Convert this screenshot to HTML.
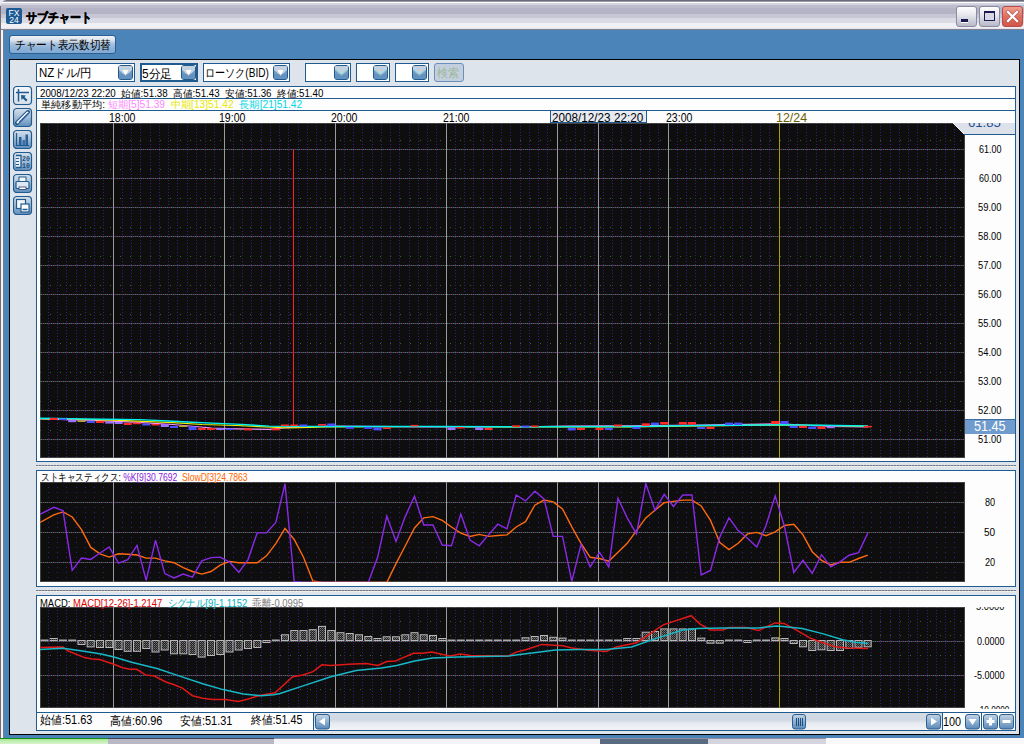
<!DOCTYPE html><html lang="ja"><head><meta charset="utf-8"><style>
*{margin:0;padding:0;box-sizing:border-box}
html,body{width:1024px;height:744px;overflow:hidden;background:#4a84b8;font-family:"Liberation Sans", sans-serif;}
.a{position:absolute}
.t{position:absolute;white-space:nowrap;line-height:1;color:#000}
.dd{position:absolute;background:#fff;border:1px solid #1f5b8e}
.arr{position:absolute;border:1px solid #2a5f92;border-radius:2px;background:linear-gradient(#a9c3dc,#6f99c2 55%,#5584b4)}
.arr:after{content:"";position:absolute;left:4px;top:5px;border-left:3px solid transparent;border-right:3px solid transparent;border-top:5px solid #fff}
.arrd{position:absolute;border:1px solid #2a5f92;border-radius:2px;background:linear-gradient(#c9d3de,#b6c5d4 40%,#6f99c2 60%,#5584b4)}
.panel{position:absolute;background:#fdfdfd;border:1px solid #1f5b8e}
.blk{position:absolute;background:#0e0e0e}
.ic{position:absolute;width:19px;height:19px;border:1px solid #1f5b8e;border-radius:4px;overflow:hidden}
</style></head><body>
<div class="a" style="left:0;top:0;width:1024px;height:744px;background:#4a84b8"></div>
<div class="a" style="left:0;top:6px;width:1px;height:732px;background:#6d6d7a"></div>
<div class="a" style="left:1px;top:6px;width:2px;height:732px;background:#f4f4f8"></div>
<div class="a" style="left:3px;top:6px;width:1px;height:732px;background:#7d7d8a"></div>
<div class="a" style="left:0;top:0;width:1024px;height:8px;background:#e8e8ee"></div>
<div class="a" style="left:0;top:0;width:1024px;height:30px;border-radius:7px 0 0 0;overflow:hidden;background:linear-gradient(#6a6a78 0 1px,#9898a8 1px 2px,#ffffff 2px 3px,#d4d4e0 3px 5px,#bcbccc 5px 8px,#b4b4c6 8px 14px,#c6c6d4 14px 18px,#dadae4 18px 23px,#f0f0f4 23px 28px,#e4e4ec 28px 29px,#80808e 29px 30px)"></div>
<div class="a" style="left:0;top:6px;width:1px;height:24px;background:#6d6d7a"></div>
<div class="a" style="left:6px;top:8px;width:16px;height:16px;background:#1d5a93;border-radius:2px"></div>
<svg class="a" style="left:6px;top:8px" width="16" height="16"><text x="8" y="7.5" font-family="Liberation Sans" font-size="8.5" fill="#fff" text-anchor="middle">FX</text><text x="8" y="15" font-family="Liberation Sans" font-size="8.5" fill="#fff" text-anchor="middle">24</text></svg>
<div class="t" id="tx1" style="left:26.40px;top:11px;font-size:13px;transform:scaleX(0.8395);transform-origin:0 0;font-weight:bold;-webkit-text-stroke:0.5px #000">サブチャート</div>
<div class="a" style="left:956px;top:6px;width:21px;height:21px;border:1px solid #8a8aa0;border-radius:3px;background:linear-gradient(#ffffff,#e8e8ef 40%,#c8c8d6 80%,#b8b8c8)"></div>
<div class="a" style="left:979px;top:6px;width:21px;height:21px;border:1px solid #8a8aa0;border-radius:3px;background:linear-gradient(#ffffff,#e8e8ef 40%,#c8c8d6 80%,#b8b8c8)"></div>
<div class="a" style="left:1002px;top:6px;width:21px;height:21px;border:1px solid #b84a4a;border-radius:3px;background:linear-gradient(#f0a090,#e07060 50%,#d05848)"></div>
<div class="a" style="left:961px;top:19px;width:7px;height:3px;background:#1a1a50;box-shadow:0 1px 0 #fff"></div>
<div class="a" style="left:984px;top:11px;width:11px;height:10px;border:1px solid #1a1a50;border-top-width:2px;background:#d8d8e4"></div>
<svg class="a" style="left:1002px;top:6px" width="21" height="21"><path d="M6 6 L15 15 M15 6 L6 15" stroke="#9a3838" stroke-width="3.6" stroke-linecap="square" opacity="0.7"/><path d="M6 6 L15 15 M15 6 L6 15" stroke="#fff" stroke-width="2.4" stroke-linecap="square"/></svg>
<div class="a" style="left:9px;top:59px;width:1011px;height:676px;border:1px solid #000;background:#dee4ec"></div>
<div class="a" style="left:9px;top:35px;width:107px;height:19px;border:1px solid #2a5f92;border-radius:3px;background:linear-gradient(#eef1f6 0%,#dce3ec 25%,#a9c3df 45%,#8fb3d8 70%,#82aad4 100%)"></div>
<div class="t" id="tx2" style="left:14.81px;top:39px;font-size:12px;transform:scaleX(0.8896);transform-origin:0 0;">チャート表示数切替</div>
<div class="dd" style="left:36px;top:63px;width:99px;height:19px;"></div>
<svg class="a" style="left:118px;top:65px" width="15" height="15"><rect x="0.5" y="0.5" width="14" height="14" rx="2.5" fill="#6f9ac4" stroke="#1f5b8e" stroke-width="1"/><path d="M1 1.5 Q1 1 2 1 L13 1 Q14 1 14 2 L14 5 L7.5 11 L1 5 Z" fill="#c4d1df"/><rect x="1" y="9" width="13" height="5" fill="#5f8cbc" opacity="0.6"/><path d="M4.5 5 L10.5 5 L7.5 10.5 Z" fill="#fff"/></svg>
<div class="dd" style="left:140px;top:63px;width:58px;height:19px;border:2px solid #1f5b8e;"></div>
<svg class="a" style="left:181px;top:65px" width="15" height="15"><rect x="0.5" y="0.5" width="14" height="14" rx="2.5" fill="#6f9ac4" stroke="#1f5b8e" stroke-width="1"/><path d="M1 1.5 Q1 1 2 1 L13 1 Q14 1 14 2 L14 5 L7.5 11 L1 5 Z" fill="#c4d1df"/><rect x="1" y="9" width="13" height="5" fill="#5f8cbc" opacity="0.6"/><path d="M4.5 5 L10.5 5 L7.5 10.5 Z" fill="#fff"/></svg>
<div class="dd" style="left:203px;top:63px;width:87px;height:19px;"></div>
<svg class="a" style="left:273px;top:65px" width="15" height="15"><rect x="0.5" y="0.5" width="14" height="14" rx="2.5" fill="#6f9ac4" stroke="#1f5b8e" stroke-width="1"/><path d="M1 1.5 Q1 1 2 1 L13 1 Q14 1 14 2 L14 5 L7.5 11 L1 5 Z" fill="#c4d1df"/><rect x="1" y="9" width="13" height="5" fill="#5f8cbc" opacity="0.6"/><path d="M4.5 5 L10.5 5 L7.5 10.5 Z" fill="#fff"/></svg>
<div class="dd" style="left:305px;top:63px;width:46px;height:19px;"></div>
<svg class="a" style="left:334px;top:65px" width="15" height="15"><rect x="0.5" y="0.5" width="14" height="14" rx="2.5" fill="#6f9ac4" stroke="#1f5b8e" stroke-width="1"/><path d="M1 1.5 Q1 1 2 1 L13 1 Q14 1 14 2 L14 5 L7.5 11 L1 5 Z" fill="#c4d1df"/><rect x="1" y="9" width="13" height="5" fill="#5f8cbc" opacity="0.6"/><path d="M2 5 L7.5 10 L13 5" fill="none" stroke="#6fd0d8" stroke-width="1"/></svg>
<div class="dd" style="left:356px;top:63px;width:34px;height:19px;"></div>
<svg class="a" style="left:373px;top:65px" width="15" height="15"><rect x="0.5" y="0.5" width="14" height="14" rx="2.5" fill="#6f9ac4" stroke="#1f5b8e" stroke-width="1"/><path d="M1 1.5 Q1 1 2 1 L13 1 Q14 1 14 2 L14 5 L7.5 11 L1 5 Z" fill="#c4d1df"/><rect x="1" y="9" width="13" height="5" fill="#5f8cbc" opacity="0.6"/><path d="M2 5 L7.5 10 L13 5" fill="none" stroke="#6fd0d8" stroke-width="1"/></svg>
<div class="dd" style="left:395px;top:63px;width:34px;height:19px;"></div>
<svg class="a" style="left:412px;top:65px" width="15" height="15"><rect x="0.5" y="0.5" width="14" height="14" rx="2.5" fill="#6f9ac4" stroke="#1f5b8e" stroke-width="1"/><path d="M1 1.5 Q1 1 2 1 L13 1 Q14 1 14 2 L14 5 L7.5 11 L1 5 Z" fill="#c4d1df"/><rect x="1" y="9" width="13" height="5" fill="#5f8cbc" opacity="0.6"/><path d="M2 5 L7.5 10 L13 5" fill="none" stroke="#6fd0d8" stroke-width="1"/></svg>
<div class="t" id="tx3" style="left:38.80px;top:67px;font-size:12px;transform:scaleX(0.9528);transform-origin:0 0;">NZドル/円</div>
<div class="t" id="tx4" style="left:141.51px;top:68px;font-size:12px;transform:scaleX(0.9897);transform-origin:0 0;">5分足</div>
<div class="t" id="tx5" style="left:204.72px;top:67px;font-size:12px;transform:scaleX(0.8411);transform-origin:0 0;">ローソク(BID)</div>
<div class="a" style="left:434px;top:63px;width:30px;height:19px;border:1px solid #6a8fb8;border-radius:3px;background:#c3cfdc"></div>
<div class="t" id="tx6" style="left:437.40px;top:67px;font-size:12px;transform:scaleX(0.9167);transform-origin:0 0;color:#9fb89f">検索</div>
<svg class="a" style="left:13px;top:86px" width="20" height="20"><defs><linearGradient id="g86" x1="0" y1="0" x2="0" y2="1"><stop offset="0" stop-color="#f6f8fb"/><stop offset="1" stop-color="#d4dde8"/></linearGradient></defs><rect x="0.5" y="0.5" width="18" height="18" rx="3.5" fill="url(#g86)" stroke="#1f5b8e" stroke-width="1.2"/><path d="M5.5 3 V15.5 M3 6.5 H16" stroke="#1f5b8e" stroke-width="1.5"/><path d="M8 9 L13 9.5 L11.5 11 L14.5 14 L13 15.5 L10 12.5 L8.5 14 Z" fill="#1f5b8e"/></svg>
<svg class="a" style="left:13px;top:108px" width="20" height="20"><defs><linearGradient id="g108" x1="0" y1="0" x2="0" y2="1"><stop offset="0" stop-color="#d6e0ea"/><stop offset="0.45" stop-color="#a8c0d8"/><stop offset="1" stop-color="#5f8dbd"/></linearGradient></defs><rect x="0.5" y="0.5" width="18" height="18" rx="3.5" fill="url(#g108)" stroke="#1f5b8e" stroke-width="1.2"/><path d="M4 15 L15 4" stroke="#1f4f80" stroke-width="4" stroke-linecap="round"/><path d="M4.5 14.5 L14.5 4.5" stroke="#f4f8ff" stroke-width="2" stroke-linecap="round"/><path d="M6 14 L15 5" stroke="#3a6fd8" stroke-width="1"/></svg>
<svg class="a" style="left:13px;top:130px" width="20" height="20"><defs><linearGradient id="g130" x1="0" y1="0" x2="0" y2="1"><stop offset="0" stop-color="#d6e0ea"/><stop offset="0.45" stop-color="#a8c0d8"/><stop offset="1" stop-color="#5f8dbd"/></linearGradient></defs><rect x="0.5" y="0.5" width="18" height="18" rx="3.5" fill="url(#g130)" stroke="#1f5b8e" stroke-width="1.2"/><path d="M3.5 3 V15.5 H16" stroke="#1f5b8e" stroke-width="1.2" fill="none"/><rect x="6" y="7" width="2.5" height="8" fill="#2a5f98"/><rect x="9.5" y="10" width="2.5" height="5" fill="#3a70a8"/><rect x="12.5" y="4.5" width="2.5" height="10.5" fill="#2a5f98"/></svg>
<svg class="a" style="left:13px;top:152px" width="20" height="20"><defs><linearGradient id="g152" x1="0" y1="0" x2="0" y2="1"><stop offset="0" stop-color="#d6e0ea"/><stop offset="0.45" stop-color="#a8c0d8"/><stop offset="1" stop-color="#5f8dbd"/></linearGradient></defs><rect x="0.5" y="0.5" width="18" height="18" rx="3.5" fill="url(#g152)" stroke="#1f5b8e" stroke-width="1.2"/><path d="M3 3.5 H8 V15.5 H3" stroke="#1f5b8e" stroke-width="1.3" fill="#e8eef6"/><path d="M3 6.5 H6 M3 9.5 H6 M3 12.5 H6" stroke="#1f5b8e" stroke-width="1"/><text x="9" y="9" font-family="Liberation Mono" font-size="6.5" font-weight="bold" fill="#1f4f80">20</text><text x="9" y="15.5" font-family="Liberation Mono" font-size="6.5" font-weight="bold" fill="#1f4f80">10</text></svg>
<svg class="a" style="left:13px;top:174px" width="20" height="20"><defs><linearGradient id="g174" x1="0" y1="0" x2="0" y2="1"><stop offset="0" stop-color="#d6e0ea"/><stop offset="0.45" stop-color="#a8c0d8"/><stop offset="1" stop-color="#5f8dbd"/></linearGradient></defs><rect x="0.5" y="0.5" width="18" height="18" rx="3.5" fill="url(#g174)" stroke="#1f5b8e" stroke-width="1.2"/><rect x="6" y="3" width="7" height="5" fill="#f4f6fa" stroke="#1f5b8e" stroke-width="1"/><rect x="3" y="7.5" width="13" height="7" rx="1" fill="#dfe8f2" stroke="#1f5b8e" stroke-width="1.2"/><rect x="6" y="13" width="7" height="2.5" fill="#fff" stroke="#1f3f70" stroke-width="0.8"/></svg>
<svg class="a" style="left:13px;top:196px" width="20" height="20"><defs><linearGradient id="g196" x1="0" y1="0" x2="0" y2="1"><stop offset="0" stop-color="#d6e0ea"/><stop offset="0.45" stop-color="#a8c0d8"/><stop offset="1" stop-color="#5f8dbd"/></linearGradient></defs><rect x="0.5" y="0.5" width="18" height="18" rx="3.5" fill="url(#g196)" stroke="#1f5b8e" stroke-width="1.2"/><rect x="3.5" y="3.5" width="9" height="9" fill="#f4f6fa" stroke="#1f5b8e" stroke-width="1.2"/><rect x="8" y="8" width="8" height="8" fill="#ffffff" stroke="#1f5b8e" stroke-width="1.2"/><path d="M9.5 13.5 H14.5" stroke="#1f5b8e" stroke-width="1.5"/></svg>
<div class="panel" style="left:36px;top:86px;width:980px;height:376px"></div>
<div class="panel" style="left:36px;top:470px;width:980px;height:117px"></div>
<div class="panel" style="left:36px;top:595px;width:980px;height:136px"></div>
<div class="a" style="left:36px;top:465px;width:980px;height:1px;background:repeating-linear-gradient(90deg,#707888 0 2px,#a0a8b8 2px 3px)"></div><div class="a" style="left:36px;top:466px;width:980px;height:1px;background:#eef0e8"></div>
<div class="a" style="left:36px;top:590px;width:980px;height:1px;background:repeating-linear-gradient(90deg,#707888 0 2px,#a0a8b8 2px 3px)"></div><div class="a" style="left:36px;top:591px;width:980px;height:1px;background:#eef0e8"></div>
<div class="a" style="left:37px;top:98px;width:978px;height:1px;background:#1f5b8e"></div>
<div class="a" style="left:37px;top:110px;width:978px;height:1px;background:#1f5b8e"></div>
<div class="t" id="tx7" style="left:40.00px;top:89px;font-size:10px;transform:scaleX(0.9729);transform-origin:0 0;">2008/12/23 22:20&nbsp; 始値:51.38&nbsp; 高値:51.43&nbsp; 安値:51.36&nbsp; 終値:51.40</div>
<div class="t" id="tx8" style="left:41.28px;top:100px;font-size:10px;transform:scaleX(1.0192);transform-origin:0 0;">単純移動平均: <span style="color:#ff88ff">短期[5]51.39</span>&nbsp; <span style="color:#e8e800">中期[13]51.42</span>&nbsp; <span style="color:#00d8e8">長期[21]51.42</span></div>
<div class="blk" style="left:40px;top:123px;width:925px;height:335px"></div>
<div class="blk" style="left:40px;top:482px;width:925px;height:100px"></div>
<div class="blk" style="left:40px;top:607px;width:925px;height:101px"></div>
<svg class="a" style="left:0;top:0" width="1024" height="744"><defs><clipPath id="cm"><rect x="40" y="123" width="925" height="335"/></clipPath><clipPath id="cs"><rect x="40" y="482" width="925" height="100"/></clipPath><clipPath id="cd"><rect x="40" y="607" width="925" height="101"/></clipPath><pattern id="hp" width="2" height="2" patternUnits="userSpaceOnUse"><rect width="2" height="2" fill="#222"/><rect width="1" height="1" fill="#777"/><rect x="1" y="1" width="1" height="1" fill="#555"/></pattern></defs><g clip-path="url(#cm)"><line x1="48.5" y1="123" x2="48.5" y2="458" stroke="#3c1c80" stroke-width="1" stroke-dasharray="1 2"/><line x1="57.5" y1="123" x2="57.5" y2="458" stroke="#3c1c80" stroke-width="1" stroke-dasharray="1 2"/><line x1="66.5" y1="123" x2="66.5" y2="458" stroke="#3c1c80" stroke-width="1" stroke-dasharray="1 2"/><line x1="76.5" y1="123" x2="76.5" y2="458" stroke="#3c1c80" stroke-width="1" stroke-dasharray="1 2"/><line x1="85.5" y1="123" x2="85.5" y2="458" stroke="#3c1c80" stroke-width="1" stroke-dasharray="1 2"/><line x1="94.5" y1="123" x2="94.5" y2="458" stroke="#3c1c80" stroke-width="1" stroke-dasharray="1 2"/><line x1="103.5" y1="123" x2="103.5" y2="458" stroke="#3c1c80" stroke-width="1" stroke-dasharray="1 2"/><line x1="113.5" y1="123" x2="113.5" y2="458" stroke="#3c1c80" stroke-width="1" stroke-dasharray="1 2"/><line x1="122.5" y1="123" x2="122.5" y2="458" stroke="#3c1c80" stroke-width="1" stroke-dasharray="1 2"/><line x1="131.5" y1="123" x2="131.5" y2="458" stroke="#3c1c80" stroke-width="1" stroke-dasharray="1 2"/><line x1="140.5" y1="123" x2="140.5" y2="458" stroke="#3c1c80" stroke-width="1" stroke-dasharray="1 2"/><line x1="150.5" y1="123" x2="150.5" y2="458" stroke="#3c1c80" stroke-width="1" stroke-dasharray="1 2"/><line x1="159.5" y1="123" x2="159.5" y2="458" stroke="#3c1c80" stroke-width="1" stroke-dasharray="1 2"/><line x1="168.5" y1="123" x2="168.5" y2="458" stroke="#3c1c80" stroke-width="1" stroke-dasharray="1 2"/><line x1="177.5" y1="123" x2="177.5" y2="458" stroke="#3c1c80" stroke-width="1" stroke-dasharray="1 2"/><line x1="187.5" y1="123" x2="187.5" y2="458" stroke="#3c1c80" stroke-width="1" stroke-dasharray="1 2"/><line x1="196.5" y1="123" x2="196.5" y2="458" stroke="#3c1c80" stroke-width="1" stroke-dasharray="1 2"/><line x1="205.5" y1="123" x2="205.5" y2="458" stroke="#3c1c80" stroke-width="1" stroke-dasharray="1 2"/><line x1="214.5" y1="123" x2="214.5" y2="458" stroke="#3c1c80" stroke-width="1" stroke-dasharray="1 2"/><line x1="224.5" y1="123" x2="224.5" y2="458" stroke="#3c1c80" stroke-width="1" stroke-dasharray="1 2"/><line x1="233.5" y1="123" x2="233.5" y2="458" stroke="#3c1c80" stroke-width="1" stroke-dasharray="1 2"/><line x1="242.5" y1="123" x2="242.5" y2="458" stroke="#3c1c80" stroke-width="1" stroke-dasharray="1 2"/><line x1="251.5" y1="123" x2="251.5" y2="458" stroke="#3c1c80" stroke-width="1" stroke-dasharray="1 2"/><line x1="261.5" y1="123" x2="261.5" y2="458" stroke="#3c1c80" stroke-width="1" stroke-dasharray="1 2"/><line x1="270.5" y1="123" x2="270.5" y2="458" stroke="#3c1c80" stroke-width="1" stroke-dasharray="1 2"/><line x1="279.5" y1="123" x2="279.5" y2="458" stroke="#3c1c80" stroke-width="1" stroke-dasharray="1 2"/><line x1="288.5" y1="123" x2="288.5" y2="458" stroke="#3c1c80" stroke-width="1" stroke-dasharray="1 2"/><line x1="298.5" y1="123" x2="298.5" y2="458" stroke="#3c1c80" stroke-width="1" stroke-dasharray="1 2"/><line x1="307.5" y1="123" x2="307.5" y2="458" stroke="#3c1c80" stroke-width="1" stroke-dasharray="1 2"/><line x1="316.5" y1="123" x2="316.5" y2="458" stroke="#3c1c80" stroke-width="1" stroke-dasharray="1 2"/><line x1="325.5" y1="123" x2="325.5" y2="458" stroke="#3c1c80" stroke-width="1" stroke-dasharray="1 2"/><line x1="335.5" y1="123" x2="335.5" y2="458" stroke="#3c1c80" stroke-width="1" stroke-dasharray="1 2"/><line x1="344.5" y1="123" x2="344.5" y2="458" stroke="#3c1c80" stroke-width="1" stroke-dasharray="1 2"/><line x1="353.5" y1="123" x2="353.5" y2="458" stroke="#3c1c80" stroke-width="1" stroke-dasharray="1 2"/><line x1="362.5" y1="123" x2="362.5" y2="458" stroke="#3c1c80" stroke-width="1" stroke-dasharray="1 2"/><line x1="372.5" y1="123" x2="372.5" y2="458" stroke="#3c1c80" stroke-width="1" stroke-dasharray="1 2"/><line x1="381.5" y1="123" x2="381.5" y2="458" stroke="#3c1c80" stroke-width="1" stroke-dasharray="1 2"/><line x1="390.5" y1="123" x2="390.5" y2="458" stroke="#3c1c80" stroke-width="1" stroke-dasharray="1 2"/><line x1="399.5" y1="123" x2="399.5" y2="458" stroke="#3c1c80" stroke-width="1" stroke-dasharray="1 2"/><line x1="409.5" y1="123" x2="409.5" y2="458" stroke="#3c1c80" stroke-width="1" stroke-dasharray="1 2"/><line x1="418.5" y1="123" x2="418.5" y2="458" stroke="#3c1c80" stroke-width="1" stroke-dasharray="1 2"/><line x1="427.5" y1="123" x2="427.5" y2="458" stroke="#3c1c80" stroke-width="1" stroke-dasharray="1 2"/><line x1="436.5" y1="123" x2="436.5" y2="458" stroke="#3c1c80" stroke-width="1" stroke-dasharray="1 2"/><line x1="446.5" y1="123" x2="446.5" y2="458" stroke="#3c1c80" stroke-width="1" stroke-dasharray="1 2"/><line x1="455.5" y1="123" x2="455.5" y2="458" stroke="#3c1c80" stroke-width="1" stroke-dasharray="1 2"/><line x1="464.5" y1="123" x2="464.5" y2="458" stroke="#3c1c80" stroke-width="1" stroke-dasharray="1 2"/><line x1="473.5" y1="123" x2="473.5" y2="458" stroke="#3c1c80" stroke-width="1" stroke-dasharray="1 2"/><line x1="483.5" y1="123" x2="483.5" y2="458" stroke="#3c1c80" stroke-width="1" stroke-dasharray="1 2"/><line x1="492.5" y1="123" x2="492.5" y2="458" stroke="#3c1c80" stroke-width="1" stroke-dasharray="1 2"/><line x1="501.5" y1="123" x2="501.5" y2="458" stroke="#3c1c80" stroke-width="1" stroke-dasharray="1 2"/><line x1="510.5" y1="123" x2="510.5" y2="458" stroke="#3c1c80" stroke-width="1" stroke-dasharray="1 2"/><line x1="520.5" y1="123" x2="520.5" y2="458" stroke="#3c1c80" stroke-width="1" stroke-dasharray="1 2"/><line x1="529.5" y1="123" x2="529.5" y2="458" stroke="#3c1c80" stroke-width="1" stroke-dasharray="1 2"/><line x1="538.5" y1="123" x2="538.5" y2="458" stroke="#3c1c80" stroke-width="1" stroke-dasharray="1 2"/><line x1="547.5" y1="123" x2="547.5" y2="458" stroke="#3c1c80" stroke-width="1" stroke-dasharray="1 2"/><line x1="557.5" y1="123" x2="557.5" y2="458" stroke="#3c1c80" stroke-width="1" stroke-dasharray="1 2"/><line x1="566.5" y1="123" x2="566.5" y2="458" stroke="#3c1c80" stroke-width="1" stroke-dasharray="1 2"/><line x1="575.5" y1="123" x2="575.5" y2="458" stroke="#3c1c80" stroke-width="1" stroke-dasharray="1 2"/><line x1="584.5" y1="123" x2="584.5" y2="458" stroke="#3c1c80" stroke-width="1" stroke-dasharray="1 2"/><line x1="594.5" y1="123" x2="594.5" y2="458" stroke="#3c1c80" stroke-width="1" stroke-dasharray="1 2"/><line x1="603.5" y1="123" x2="603.5" y2="458" stroke="#3c1c80" stroke-width="1" stroke-dasharray="1 2"/><line x1="612.5" y1="123" x2="612.5" y2="458" stroke="#3c1c80" stroke-width="1" stroke-dasharray="1 2"/><line x1="621.5" y1="123" x2="621.5" y2="458" stroke="#3c1c80" stroke-width="1" stroke-dasharray="1 2"/><line x1="631.5" y1="123" x2="631.5" y2="458" stroke="#3c1c80" stroke-width="1" stroke-dasharray="1 2"/><line x1="640.5" y1="123" x2="640.5" y2="458" stroke="#3c1c80" stroke-width="1" stroke-dasharray="1 2"/><line x1="649.5" y1="123" x2="649.5" y2="458" stroke="#3c1c80" stroke-width="1" stroke-dasharray="1 2"/><line x1="658.5" y1="123" x2="658.5" y2="458" stroke="#3c1c80" stroke-width="1" stroke-dasharray="1 2"/><line x1="668.5" y1="123" x2="668.5" y2="458" stroke="#3c1c80" stroke-width="1" stroke-dasharray="1 2"/><line x1="677.5" y1="123" x2="677.5" y2="458" stroke="#3c1c80" stroke-width="1" stroke-dasharray="1 2"/><line x1="686.5" y1="123" x2="686.5" y2="458" stroke="#3c1c80" stroke-width="1" stroke-dasharray="1 2"/><line x1="695.5" y1="123" x2="695.5" y2="458" stroke="#3c1c80" stroke-width="1" stroke-dasharray="1 2"/><line x1="705.5" y1="123" x2="705.5" y2="458" stroke="#3c1c80" stroke-width="1" stroke-dasharray="1 2"/><line x1="714.5" y1="123" x2="714.5" y2="458" stroke="#3c1c80" stroke-width="1" stroke-dasharray="1 2"/><line x1="723.5" y1="123" x2="723.5" y2="458" stroke="#3c1c80" stroke-width="1" stroke-dasharray="1 2"/><line x1="732.5" y1="123" x2="732.5" y2="458" stroke="#3c1c80" stroke-width="1" stroke-dasharray="1 2"/><line x1="742.5" y1="123" x2="742.5" y2="458" stroke="#3c1c80" stroke-width="1" stroke-dasharray="1 2"/><line x1="751.5" y1="123" x2="751.5" y2="458" stroke="#3c1c80" stroke-width="1" stroke-dasharray="1 2"/><line x1="760.5" y1="123" x2="760.5" y2="458" stroke="#3c1c80" stroke-width="1" stroke-dasharray="1 2"/><line x1="769.5" y1="123" x2="769.5" y2="458" stroke="#3c1c80" stroke-width="1" stroke-dasharray="1 2"/><line x1="779.5" y1="123" x2="779.5" y2="458" stroke="#3c1c80" stroke-width="1" stroke-dasharray="1 2"/><line x1="788.5" y1="123" x2="788.5" y2="458" stroke="#3c1c80" stroke-width="1" stroke-dasharray="1 2"/><line x1="797.5" y1="123" x2="797.5" y2="458" stroke="#3c1c80" stroke-width="1" stroke-dasharray="1 2"/><line x1="806.5" y1="123" x2="806.5" y2="458" stroke="#3c1c80" stroke-width="1" stroke-dasharray="1 2"/><line x1="816.5" y1="123" x2="816.5" y2="458" stroke="#3c1c80" stroke-width="1" stroke-dasharray="1 2"/><line x1="825.5" y1="123" x2="825.5" y2="458" stroke="#3c1c80" stroke-width="1" stroke-dasharray="1 2"/><line x1="834.5" y1="123" x2="834.5" y2="458" stroke="#3c1c80" stroke-width="1" stroke-dasharray="1 2"/><line x1="843.5" y1="123" x2="843.5" y2="458" stroke="#3c1c80" stroke-width="1" stroke-dasharray="1 2"/><line x1="853.5" y1="123" x2="853.5" y2="458" stroke="#3c1c80" stroke-width="1" stroke-dasharray="1 2"/><line x1="862.5" y1="123" x2="862.5" y2="458" stroke="#3c1c80" stroke-width="1" stroke-dasharray="1 2"/><line x1="871.5" y1="123" x2="871.5" y2="458" stroke="#3c1c80" stroke-width="1" stroke-dasharray="1 2"/><line x1="880.5" y1="123" x2="880.5" y2="458" stroke="#3c1c80" stroke-width="1" stroke-dasharray="1 2"/><line x1="890.5" y1="123" x2="890.5" y2="458" stroke="#3c1c80" stroke-width="1" stroke-dasharray="1 2"/><line x1="899.5" y1="123" x2="899.5" y2="458" stroke="#3c1c80" stroke-width="1" stroke-dasharray="1 2"/><line x1="908.5" y1="123" x2="908.5" y2="458" stroke="#3c1c80" stroke-width="1" stroke-dasharray="1 2"/><line x1="917.5" y1="123" x2="917.5" y2="458" stroke="#3c1c80" stroke-width="1" stroke-dasharray="1 2"/><line x1="927.5" y1="123" x2="927.5" y2="458" stroke="#3c1c80" stroke-width="1" stroke-dasharray="1 2"/><line x1="936.5" y1="123" x2="936.5" y2="458" stroke="#3c1c80" stroke-width="1" stroke-dasharray="1 2"/><line x1="945.5" y1="123" x2="945.5" y2="458" stroke="#3c1c80" stroke-width="1" stroke-dasharray="1 2"/><line x1="954.5" y1="123" x2="954.5" y2="458" stroke="#3c1c80" stroke-width="1" stroke-dasharray="1 2"/><line x1="40" y1="140.5" x2="964" y2="140.5" stroke="#2a6a2a" stroke-width="1" stroke-dasharray="1 9"/><line x1="40" y1="169.5" x2="964" y2="169.5" stroke="#2a6a2a" stroke-width="1" stroke-dasharray="1 9"/><line x1="40" y1="198.5" x2="964" y2="198.5" stroke="#2a6a2a" stroke-width="1" stroke-dasharray="1 9"/><line x1="40" y1="227.5" x2="964" y2="227.5" stroke="#2a6a2a" stroke-width="1" stroke-dasharray="1 9"/><line x1="40" y1="256.5" x2="964" y2="256.5" stroke="#2a6a2a" stroke-width="1" stroke-dasharray="1 9"/><line x1="40" y1="285.5" x2="964" y2="285.5" stroke="#2a6a2a" stroke-width="1" stroke-dasharray="1 9"/><line x1="40" y1="314.5" x2="964" y2="314.5" stroke="#2a6a2a" stroke-width="1" stroke-dasharray="1 9"/><line x1="40" y1="343.5" x2="964" y2="343.5" stroke="#2a6a2a" stroke-width="1" stroke-dasharray="1 9"/><line x1="40" y1="372.5" x2="964" y2="372.5" stroke="#2a6a2a" stroke-width="1" stroke-dasharray="1 9"/><line x1="40" y1="401.5" x2="964" y2="401.5" stroke="#2a6a2a" stroke-width="1" stroke-dasharray="1 9"/><line x1="40" y1="430.5" x2="964" y2="430.5" stroke="#2a6a2a" stroke-width="1" stroke-dasharray="1 9"/><line x1="40" y1="149.5" x2="964" y2="149.5" stroke="#4a2288" stroke-width="1" stroke-dasharray="1 1"/><line x1="41" y1="149.5" x2="964" y2="149.5" stroke="#2f8a32" stroke-width="1" stroke-dasharray="1 5"/><line x1="43" y1="149.5" x2="964" y2="149.5" stroke="#8a4020" stroke-width="1" stroke-dasharray="1 5"/><line x1="45" y1="149.5" x2="964" y2="149.5" stroke="#2f8a32" stroke-width="1" stroke-dasharray="1 5"/><line x1="40" y1="178.5" x2="964" y2="178.5" stroke="#4a2288" stroke-width="1" stroke-dasharray="1 1"/><line x1="41" y1="178.5" x2="964" y2="178.5" stroke="#2f8a32" stroke-width="1" stroke-dasharray="1 5"/><line x1="43" y1="178.5" x2="964" y2="178.5" stroke="#8a4020" stroke-width="1" stroke-dasharray="1 5"/><line x1="45" y1="178.5" x2="964" y2="178.5" stroke="#2f8a32" stroke-width="1" stroke-dasharray="1 5"/><line x1="40" y1="207.5" x2="964" y2="207.5" stroke="#4a2288" stroke-width="1" stroke-dasharray="1 1"/><line x1="41" y1="207.5" x2="964" y2="207.5" stroke="#2f8a32" stroke-width="1" stroke-dasharray="1 5"/><line x1="43" y1="207.5" x2="964" y2="207.5" stroke="#8a4020" stroke-width="1" stroke-dasharray="1 5"/><line x1="45" y1="207.5" x2="964" y2="207.5" stroke="#2f8a32" stroke-width="1" stroke-dasharray="1 5"/><line x1="40" y1="236.5" x2="964" y2="236.5" stroke="#4a2288" stroke-width="1" stroke-dasharray="1 1"/><line x1="41" y1="236.5" x2="964" y2="236.5" stroke="#2f8a32" stroke-width="1" stroke-dasharray="1 5"/><line x1="43" y1="236.5" x2="964" y2="236.5" stroke="#8a4020" stroke-width="1" stroke-dasharray="1 5"/><line x1="45" y1="236.5" x2="964" y2="236.5" stroke="#2f8a32" stroke-width="1" stroke-dasharray="1 5"/><line x1="40" y1="265.5" x2="964" y2="265.5" stroke="#4a2288" stroke-width="1" stroke-dasharray="1 1"/><line x1="41" y1="265.5" x2="964" y2="265.5" stroke="#2f8a32" stroke-width="1" stroke-dasharray="1 5"/><line x1="43" y1="265.5" x2="964" y2="265.5" stroke="#8a4020" stroke-width="1" stroke-dasharray="1 5"/><line x1="45" y1="265.5" x2="964" y2="265.5" stroke="#2f8a32" stroke-width="1" stroke-dasharray="1 5"/><line x1="40" y1="294.5" x2="964" y2="294.5" stroke="#4a2288" stroke-width="1" stroke-dasharray="1 1"/><line x1="41" y1="294.5" x2="964" y2="294.5" stroke="#2f8a32" stroke-width="1" stroke-dasharray="1 5"/><line x1="43" y1="294.5" x2="964" y2="294.5" stroke="#8a4020" stroke-width="1" stroke-dasharray="1 5"/><line x1="45" y1="294.5" x2="964" y2="294.5" stroke="#2f8a32" stroke-width="1" stroke-dasharray="1 5"/><line x1="40" y1="323.5" x2="964" y2="323.5" stroke="#4a2288" stroke-width="1" stroke-dasharray="1 1"/><line x1="41" y1="323.5" x2="964" y2="323.5" stroke="#2f8a32" stroke-width="1" stroke-dasharray="1 5"/><line x1="43" y1="323.5" x2="964" y2="323.5" stroke="#8a4020" stroke-width="1" stroke-dasharray="1 5"/><line x1="45" y1="323.5" x2="964" y2="323.5" stroke="#2f8a32" stroke-width="1" stroke-dasharray="1 5"/><line x1="40" y1="352.5" x2="964" y2="352.5" stroke="#4a2288" stroke-width="1" stroke-dasharray="1 1"/><line x1="41" y1="352.5" x2="964" y2="352.5" stroke="#2f8a32" stroke-width="1" stroke-dasharray="1 5"/><line x1="43" y1="352.5" x2="964" y2="352.5" stroke="#8a4020" stroke-width="1" stroke-dasharray="1 5"/><line x1="45" y1="352.5" x2="964" y2="352.5" stroke="#2f8a32" stroke-width="1" stroke-dasharray="1 5"/><line x1="40" y1="381.5" x2="964" y2="381.5" stroke="#4a2288" stroke-width="1" stroke-dasharray="1 1"/><line x1="41" y1="381.5" x2="964" y2="381.5" stroke="#2f8a32" stroke-width="1" stroke-dasharray="1 5"/><line x1="43" y1="381.5" x2="964" y2="381.5" stroke="#8a4020" stroke-width="1" stroke-dasharray="1 5"/><line x1="45" y1="381.5" x2="964" y2="381.5" stroke="#2f8a32" stroke-width="1" stroke-dasharray="1 5"/><line x1="40" y1="410.5" x2="964" y2="410.5" stroke="#4a2288" stroke-width="1" stroke-dasharray="1 1"/><line x1="41" y1="410.5" x2="964" y2="410.5" stroke="#2f8a32" stroke-width="1" stroke-dasharray="1 5"/><line x1="43" y1="410.5" x2="964" y2="410.5" stroke="#8a4020" stroke-width="1" stroke-dasharray="1 5"/><line x1="45" y1="410.5" x2="964" y2="410.5" stroke="#2f8a32" stroke-width="1" stroke-dasharray="1 5"/><line x1="40" y1="439.5" x2="964" y2="439.5" stroke="#4a2288" stroke-width="1" stroke-dasharray="1 1"/><line x1="41" y1="439.5" x2="964" y2="439.5" stroke="#2f8a32" stroke-width="1" stroke-dasharray="1 5"/><line x1="43" y1="439.5" x2="964" y2="439.5" stroke="#8a4020" stroke-width="1" stroke-dasharray="1 5"/><line x1="45" y1="439.5" x2="964" y2="439.5" stroke="#2f8a32" stroke-width="1" stroke-dasharray="1 5"/><line x1="113.5" y1="123" x2="113.5" y2="458" stroke="#9a9aa2" stroke-width="1"/><line x1="224.5" y1="123" x2="224.5" y2="458" stroke="#9a9aa2" stroke-width="1"/><line x1="335.5" y1="123" x2="335.5" y2="458" stroke="#9a9aa2" stroke-width="1"/><line x1="446.5" y1="123" x2="446.5" y2="458" stroke="#9a9aa2" stroke-width="1"/><line x1="557.5" y1="123" x2="557.5" y2="458" stroke="#9a9aa2" stroke-width="1"/><line x1="668.5" y1="123" x2="668.5" y2="458" stroke="#9a9aa2" stroke-width="1"/><line x1="598.5" y1="123" x2="598.5" y2="458" stroke="#9a9aa2" stroke-width="1"/><line x1="779.5" y1="123" x2="779.5" y2="458" stroke="#a8a000" stroke-width="1"/><rect x="40.5" y="123.5" width="924" height="334" fill="none" stroke="#777" stroke-width="1" stroke-dasharray="1 1"/><line x1="293.5" y1="150" x2="293.5" y2="425" stroke="#ff2020" stroke-width="1"/><polyline points="40.0,418.9 84.8,420.2 133.7,422.2 172.7,424.5 211.8,428.0 236.0,428.8 269.0,429.4 288.6,427.5 327.7,426.1 430.0,426.8 539.0,426.5 567.0,426.2 630.0,425.8 700.0,425.2 780.0,423.8 830.0,426.5 868.0,427.0" fill="none" stroke="#ff90ff" stroke-width="1.2"/><polyline points="40.0,418.7 114.0,420.2 172.7,422.6 202.0,424.5 236.0,425.5 288.6,428.0 327.7,426.9 430.0,426.5 530.0,427.0 630.0,426.8 700.0,426.0 780.0,425.0 830.0,425.5 868.0,426.3" fill="none" stroke="#f0f000" stroke-width="1.2"/><polyline points="40.0,418.3 84.8,419.0 139.5,419.6 168.8,421.0 192.2,422.2 223.5,423.6 236.0,424.1 269.0,426.1 327.7,426.5 430.0,426.5 530.0,426.8 630.0,426.5 700.0,425.5 780.0,424.8 820.0,425.2 868.0,426.0" fill="none" stroke="#00f0f0" stroke-width="1.4"/><rect x="49.8" y="418.0" width="8" height="2.0" fill="#ff2a2a"/><rect x="59.0" y="418.5" width="8" height="1.5" fill="#4a50ff"/><rect x="68.2" y="419.6" width="8" height="2.6" fill="#a070ff"/><rect x="77.5" y="420.5" width="8" height="1.5" fill="#b8a830"/><rect x="86.8" y="420.6" width="8" height="2.4" fill="#4a50ff"/><rect x="96.0" y="421.0" width="8" height="2.0" fill="#ff2a2a"/><rect x="105.2" y="421.6" width="8" height="2.0" fill="#a070ff"/><rect x="114.5" y="422.0" width="8" height="2.0" fill="#a070ff"/><rect x="123.8" y="423.0" width="8" height="2.0" fill="#ff2a2a"/><rect x="133.0" y="422.6" width="8" height="1.6" fill="#ff2a2a"/><rect x="142.2" y="423.5" width="8" height="2.0" fill="#4a50ff"/><rect x="151.5" y="424.0" width="8" height="1.5" fill="#ff2a2a"/><rect x="160.8" y="424.0" width="8" height="3.0" fill="#a070ff"/><rect x="170.0" y="426.0" width="8" height="2.0" fill="#4a50ff"/><rect x="179.2" y="425.5" width="8" height="1.5" fill="#b8a830"/><rect x="188.5" y="426.5" width="8" height="3.5" fill="#4a50ff"/><rect x="197.8" y="428.0" width="8" height="2.0" fill="#ff2a2a"/><rect x="207.0" y="428.0" width="8" height="2.0" fill="#ff2a2a"/><rect x="216.2" y="428.0" width="8" height="2.0" fill="#a070ff"/><rect x="225.5" y="428.4" width="8" height="1.6" fill="#4a50ff"/><rect x="244.0" y="428.4" width="8" height="2.0" fill="#ff2a2a"/><rect x="271.8" y="428.4" width="8" height="2.0" fill="#ff2a2a"/><rect x="281.0" y="424.5" width="8" height="1.5" fill="#ff2a2a"/><rect x="290.2" y="424.5" width="8" height="1.5" fill="#ff2a2a"/><rect x="299.5" y="424.5" width="8" height="2.0" fill="#4a50ff"/><rect x="318.0" y="424.0" width="8" height="1.5" fill="#ff2a2a"/><rect x="327.2" y="423.5" width="8" height="2.5" fill="#4a50ff"/><rect x="345.8" y="426.9" width="8" height="1.9" fill="#4a50ff"/><rect x="364.2" y="426.9" width="8" height="1.9" fill="#4a50ff"/><rect x="373.5" y="427.5" width="8" height="2.9" fill="#4a50ff"/><rect x="382.8" y="427.5" width="8" height="1.5" fill="#ff2a2a"/><rect x="410.5" y="424.9" width="8" height="1.5" fill="#ff2a2a"/><rect x="447.5" y="427.5" width="8" height="2.5" fill="#a070ff"/><rect x="456.8" y="427.0" width="8" height="1.5" fill="#ff2a2a"/><rect x="475.2" y="427.5" width="8" height="2.5" fill="#a070ff"/><rect x="484.5" y="428.0" width="8" height="2.0" fill="#ff2a2a"/><rect x="512.2" y="425.3" width="8" height="1.7" fill="#ff2a2a"/><rect x="521.5" y="425.5" width="8" height="2.0" fill="#4a50ff"/><rect x="530.8" y="425.5" width="8" height="1.5" fill="#ff2a2a"/><rect x="567.8" y="428.0" width="8" height="2.4" fill="#4a50ff"/><rect x="577.0" y="428.0" width="8" height="2.0" fill="#ff2a2a"/><rect x="595.5" y="428.0" width="8" height="2.0" fill="#ff2a2a"/><rect x="604.8" y="428.0" width="8" height="2.0" fill="#4a50ff"/><rect x="614.0" y="424.5" width="8" height="2.0" fill="#ff2a2a"/><rect x="632.5" y="427.0" width="8" height="2.0" fill="#4a50ff"/><rect x="641.8" y="423.3" width="8" height="2.5" fill="#ff2a2a"/><rect x="651.0" y="422.6" width="8" height="2.4" fill="#4a50ff"/><rect x="660.2" y="422.0" width="8" height="2.5" fill="#ff2a2a"/><rect x="678.8" y="422.0" width="8" height="2.5" fill="#ff2a2a"/><rect x="688.0" y="422.0" width="8" height="2.5" fill="#ff2a2a"/><rect x="697.2" y="427.0" width="8" height="2.0" fill="#4a50ff"/><rect x="706.5" y="427.0" width="8" height="2.0" fill="#ff2a2a"/><rect x="725.0" y="422.6" width="8" height="2.4" fill="#4a50ff"/><rect x="734.2" y="422.6" width="8" height="2.4" fill="#4a50ff"/><rect x="771.2" y="421.0" width="8" height="3.0" fill="#ff2a2a"/><rect x="780.5" y="421.0" width="8" height="3.0" fill="#4a50ff"/><rect x="789.8" y="425.8" width="8" height="2.2" fill="#4a50ff"/><rect x="799.0" y="425.8" width="8" height="2.2" fill="#ff2a2a"/><rect x="808.2" y="426.5" width="8" height="2.5" fill="#4a50ff"/><rect x="817.5" y="426.5" width="8" height="2.5" fill="#ff2a2a"/><rect x="826.8" y="426.5" width="8" height="1.7" fill="#a070ff"/><rect x="863.8" y="425.8" width="8" height="1.7" fill="#ff2a2a"/></g><g clip-path="url(#cs)"><line x1="48.5" y1="482" x2="48.5" y2="582" stroke="#3c1c80" stroke-width="1" stroke-dasharray="1 4"/><line x1="57.5" y1="482" x2="57.5" y2="582" stroke="#3c1c80" stroke-width="1" stroke-dasharray="1 4"/><line x1="66.5" y1="482" x2="66.5" y2="582" stroke="#3c1c80" stroke-width="1" stroke-dasharray="1 4"/><line x1="76.5" y1="482" x2="76.5" y2="582" stroke="#3c1c80" stroke-width="1" stroke-dasharray="1 4"/><line x1="85.5" y1="482" x2="85.5" y2="582" stroke="#3c1c80" stroke-width="1" stroke-dasharray="1 4"/><line x1="94.5" y1="482" x2="94.5" y2="582" stroke="#3c1c80" stroke-width="1" stroke-dasharray="1 4"/><line x1="103.5" y1="482" x2="103.5" y2="582" stroke="#3c1c80" stroke-width="1" stroke-dasharray="1 4"/><line x1="113.5" y1="482" x2="113.5" y2="582" stroke="#3c1c80" stroke-width="1" stroke-dasharray="1 4"/><line x1="122.5" y1="482" x2="122.5" y2="582" stroke="#3c1c80" stroke-width="1" stroke-dasharray="1 4"/><line x1="131.5" y1="482" x2="131.5" y2="582" stroke="#3c1c80" stroke-width="1" stroke-dasharray="1 4"/><line x1="140.5" y1="482" x2="140.5" y2="582" stroke="#3c1c80" stroke-width="1" stroke-dasharray="1 4"/><line x1="150.5" y1="482" x2="150.5" y2="582" stroke="#3c1c80" stroke-width="1" stroke-dasharray="1 4"/><line x1="159.5" y1="482" x2="159.5" y2="582" stroke="#3c1c80" stroke-width="1" stroke-dasharray="1 4"/><line x1="168.5" y1="482" x2="168.5" y2="582" stroke="#3c1c80" stroke-width="1" stroke-dasharray="1 4"/><line x1="177.5" y1="482" x2="177.5" y2="582" stroke="#3c1c80" stroke-width="1" stroke-dasharray="1 4"/><line x1="187.5" y1="482" x2="187.5" y2="582" stroke="#3c1c80" stroke-width="1" stroke-dasharray="1 4"/><line x1="196.5" y1="482" x2="196.5" y2="582" stroke="#3c1c80" stroke-width="1" stroke-dasharray="1 4"/><line x1="205.5" y1="482" x2="205.5" y2="582" stroke="#3c1c80" stroke-width="1" stroke-dasharray="1 4"/><line x1="214.5" y1="482" x2="214.5" y2="582" stroke="#3c1c80" stroke-width="1" stroke-dasharray="1 4"/><line x1="224.5" y1="482" x2="224.5" y2="582" stroke="#3c1c80" stroke-width="1" stroke-dasharray="1 4"/><line x1="233.5" y1="482" x2="233.5" y2="582" stroke="#3c1c80" stroke-width="1" stroke-dasharray="1 4"/><line x1="242.5" y1="482" x2="242.5" y2="582" stroke="#3c1c80" stroke-width="1" stroke-dasharray="1 4"/><line x1="251.5" y1="482" x2="251.5" y2="582" stroke="#3c1c80" stroke-width="1" stroke-dasharray="1 4"/><line x1="261.5" y1="482" x2="261.5" y2="582" stroke="#3c1c80" stroke-width="1" stroke-dasharray="1 4"/><line x1="270.5" y1="482" x2="270.5" y2="582" stroke="#3c1c80" stroke-width="1" stroke-dasharray="1 4"/><line x1="279.5" y1="482" x2="279.5" y2="582" stroke="#3c1c80" stroke-width="1" stroke-dasharray="1 4"/><line x1="288.5" y1="482" x2="288.5" y2="582" stroke="#3c1c80" stroke-width="1" stroke-dasharray="1 4"/><line x1="298.5" y1="482" x2="298.5" y2="582" stroke="#3c1c80" stroke-width="1" stroke-dasharray="1 4"/><line x1="307.5" y1="482" x2="307.5" y2="582" stroke="#3c1c80" stroke-width="1" stroke-dasharray="1 4"/><line x1="316.5" y1="482" x2="316.5" y2="582" stroke="#3c1c80" stroke-width="1" stroke-dasharray="1 4"/><line x1="325.5" y1="482" x2="325.5" y2="582" stroke="#3c1c80" stroke-width="1" stroke-dasharray="1 4"/><line x1="335.5" y1="482" x2="335.5" y2="582" stroke="#3c1c80" stroke-width="1" stroke-dasharray="1 4"/><line x1="344.5" y1="482" x2="344.5" y2="582" stroke="#3c1c80" stroke-width="1" stroke-dasharray="1 4"/><line x1="353.5" y1="482" x2="353.5" y2="582" stroke="#3c1c80" stroke-width="1" stroke-dasharray="1 4"/><line x1="362.5" y1="482" x2="362.5" y2="582" stroke="#3c1c80" stroke-width="1" stroke-dasharray="1 4"/><line x1="372.5" y1="482" x2="372.5" y2="582" stroke="#3c1c80" stroke-width="1" stroke-dasharray="1 4"/><line x1="381.5" y1="482" x2="381.5" y2="582" stroke="#3c1c80" stroke-width="1" stroke-dasharray="1 4"/><line x1="390.5" y1="482" x2="390.5" y2="582" stroke="#3c1c80" stroke-width="1" stroke-dasharray="1 4"/><line x1="399.5" y1="482" x2="399.5" y2="582" stroke="#3c1c80" stroke-width="1" stroke-dasharray="1 4"/><line x1="409.5" y1="482" x2="409.5" y2="582" stroke="#3c1c80" stroke-width="1" stroke-dasharray="1 4"/><line x1="418.5" y1="482" x2="418.5" y2="582" stroke="#3c1c80" stroke-width="1" stroke-dasharray="1 4"/><line x1="427.5" y1="482" x2="427.5" y2="582" stroke="#3c1c80" stroke-width="1" stroke-dasharray="1 4"/><line x1="436.5" y1="482" x2="436.5" y2="582" stroke="#3c1c80" stroke-width="1" stroke-dasharray="1 4"/><line x1="446.5" y1="482" x2="446.5" y2="582" stroke="#3c1c80" stroke-width="1" stroke-dasharray="1 4"/><line x1="455.5" y1="482" x2="455.5" y2="582" stroke="#3c1c80" stroke-width="1" stroke-dasharray="1 4"/><line x1="464.5" y1="482" x2="464.5" y2="582" stroke="#3c1c80" stroke-width="1" stroke-dasharray="1 4"/><line x1="473.5" y1="482" x2="473.5" y2="582" stroke="#3c1c80" stroke-width="1" stroke-dasharray="1 4"/><line x1="483.5" y1="482" x2="483.5" y2="582" stroke="#3c1c80" stroke-width="1" stroke-dasharray="1 4"/><line x1="492.5" y1="482" x2="492.5" y2="582" stroke="#3c1c80" stroke-width="1" stroke-dasharray="1 4"/><line x1="501.5" y1="482" x2="501.5" y2="582" stroke="#3c1c80" stroke-width="1" stroke-dasharray="1 4"/><line x1="510.5" y1="482" x2="510.5" y2="582" stroke="#3c1c80" stroke-width="1" stroke-dasharray="1 4"/><line x1="520.5" y1="482" x2="520.5" y2="582" stroke="#3c1c80" stroke-width="1" stroke-dasharray="1 4"/><line x1="529.5" y1="482" x2="529.5" y2="582" stroke="#3c1c80" stroke-width="1" stroke-dasharray="1 4"/><line x1="538.5" y1="482" x2="538.5" y2="582" stroke="#3c1c80" stroke-width="1" stroke-dasharray="1 4"/><line x1="547.5" y1="482" x2="547.5" y2="582" stroke="#3c1c80" stroke-width="1" stroke-dasharray="1 4"/><line x1="557.5" y1="482" x2="557.5" y2="582" stroke="#3c1c80" stroke-width="1" stroke-dasharray="1 4"/><line x1="566.5" y1="482" x2="566.5" y2="582" stroke="#3c1c80" stroke-width="1" stroke-dasharray="1 4"/><line x1="575.5" y1="482" x2="575.5" y2="582" stroke="#3c1c80" stroke-width="1" stroke-dasharray="1 4"/><line x1="584.5" y1="482" x2="584.5" y2="582" stroke="#3c1c80" stroke-width="1" stroke-dasharray="1 4"/><line x1="594.5" y1="482" x2="594.5" y2="582" stroke="#3c1c80" stroke-width="1" stroke-dasharray="1 4"/><line x1="603.5" y1="482" x2="603.5" y2="582" stroke="#3c1c80" stroke-width="1" stroke-dasharray="1 4"/><line x1="612.5" y1="482" x2="612.5" y2="582" stroke="#3c1c80" stroke-width="1" stroke-dasharray="1 4"/><line x1="621.5" y1="482" x2="621.5" y2="582" stroke="#3c1c80" stroke-width="1" stroke-dasharray="1 4"/><line x1="631.5" y1="482" x2="631.5" y2="582" stroke="#3c1c80" stroke-width="1" stroke-dasharray="1 4"/><line x1="640.5" y1="482" x2="640.5" y2="582" stroke="#3c1c80" stroke-width="1" stroke-dasharray="1 4"/><line x1="649.5" y1="482" x2="649.5" y2="582" stroke="#3c1c80" stroke-width="1" stroke-dasharray="1 4"/><line x1="658.5" y1="482" x2="658.5" y2="582" stroke="#3c1c80" stroke-width="1" stroke-dasharray="1 4"/><line x1="668.5" y1="482" x2="668.5" y2="582" stroke="#3c1c80" stroke-width="1" stroke-dasharray="1 4"/><line x1="677.5" y1="482" x2="677.5" y2="582" stroke="#3c1c80" stroke-width="1" stroke-dasharray="1 4"/><line x1="686.5" y1="482" x2="686.5" y2="582" stroke="#3c1c80" stroke-width="1" stroke-dasharray="1 4"/><line x1="695.5" y1="482" x2="695.5" y2="582" stroke="#3c1c80" stroke-width="1" stroke-dasharray="1 4"/><line x1="705.5" y1="482" x2="705.5" y2="582" stroke="#3c1c80" stroke-width="1" stroke-dasharray="1 4"/><line x1="714.5" y1="482" x2="714.5" y2="582" stroke="#3c1c80" stroke-width="1" stroke-dasharray="1 4"/><line x1="723.5" y1="482" x2="723.5" y2="582" stroke="#3c1c80" stroke-width="1" stroke-dasharray="1 4"/><line x1="732.5" y1="482" x2="732.5" y2="582" stroke="#3c1c80" stroke-width="1" stroke-dasharray="1 4"/><line x1="742.5" y1="482" x2="742.5" y2="582" stroke="#3c1c80" stroke-width="1" stroke-dasharray="1 4"/><line x1="751.5" y1="482" x2="751.5" y2="582" stroke="#3c1c80" stroke-width="1" stroke-dasharray="1 4"/><line x1="760.5" y1="482" x2="760.5" y2="582" stroke="#3c1c80" stroke-width="1" stroke-dasharray="1 4"/><line x1="769.5" y1="482" x2="769.5" y2="582" stroke="#3c1c80" stroke-width="1" stroke-dasharray="1 4"/><line x1="779.5" y1="482" x2="779.5" y2="582" stroke="#3c1c80" stroke-width="1" stroke-dasharray="1 4"/><line x1="788.5" y1="482" x2="788.5" y2="582" stroke="#3c1c80" stroke-width="1" stroke-dasharray="1 4"/><line x1="797.5" y1="482" x2="797.5" y2="582" stroke="#3c1c80" stroke-width="1" stroke-dasharray="1 4"/><line x1="806.5" y1="482" x2="806.5" y2="582" stroke="#3c1c80" stroke-width="1" stroke-dasharray="1 4"/><line x1="816.5" y1="482" x2="816.5" y2="582" stroke="#3c1c80" stroke-width="1" stroke-dasharray="1 4"/><line x1="825.5" y1="482" x2="825.5" y2="582" stroke="#3c1c80" stroke-width="1" stroke-dasharray="1 4"/><line x1="834.5" y1="482" x2="834.5" y2="582" stroke="#3c1c80" stroke-width="1" stroke-dasharray="1 4"/><line x1="843.5" y1="482" x2="843.5" y2="582" stroke="#3c1c80" stroke-width="1" stroke-dasharray="1 4"/><line x1="853.5" y1="482" x2="853.5" y2="582" stroke="#3c1c80" stroke-width="1" stroke-dasharray="1 4"/><line x1="862.5" y1="482" x2="862.5" y2="582" stroke="#3c1c80" stroke-width="1" stroke-dasharray="1 4"/><line x1="871.5" y1="482" x2="871.5" y2="582" stroke="#3c1c80" stroke-width="1" stroke-dasharray="1 4"/><line x1="880.5" y1="482" x2="880.5" y2="582" stroke="#3c1c80" stroke-width="1" stroke-dasharray="1 4"/><line x1="890.5" y1="482" x2="890.5" y2="582" stroke="#3c1c80" stroke-width="1" stroke-dasharray="1 4"/><line x1="899.5" y1="482" x2="899.5" y2="582" stroke="#3c1c80" stroke-width="1" stroke-dasharray="1 4"/><line x1="908.5" y1="482" x2="908.5" y2="582" stroke="#3c1c80" stroke-width="1" stroke-dasharray="1 4"/><line x1="917.5" y1="482" x2="917.5" y2="582" stroke="#3c1c80" stroke-width="1" stroke-dasharray="1 4"/><line x1="927.5" y1="482" x2="927.5" y2="582" stroke="#3c1c80" stroke-width="1" stroke-dasharray="1 4"/><line x1="936.5" y1="482" x2="936.5" y2="582" stroke="#3c1c80" stroke-width="1" stroke-dasharray="1 4"/><line x1="945.5" y1="482" x2="945.5" y2="582" stroke="#3c1c80" stroke-width="1" stroke-dasharray="1 4"/><line x1="954.5" y1="482" x2="954.5" y2="582" stroke="#3c1c80" stroke-width="1" stroke-dasharray="1 4"/><line x1="40" y1="502.5" x2="964" y2="502.5" stroke="#4a2288" stroke-width="1" stroke-dasharray="1 1"/><line x1="41" y1="502.5" x2="964" y2="502.5" stroke="#2f8a32" stroke-width="1" stroke-dasharray="1 5"/><line x1="43" y1="502.5" x2="964" y2="502.5" stroke="#8a4020" stroke-width="1" stroke-dasharray="1 5"/><line x1="45" y1="502.5" x2="964" y2="502.5" stroke="#2f8a32" stroke-width="1" stroke-dasharray="1 5"/><line x1="40" y1="532.5" x2="964" y2="532.5" stroke="#4a2288" stroke-width="1" stroke-dasharray="1 1"/><line x1="41" y1="532.5" x2="964" y2="532.5" stroke="#2f8a32" stroke-width="1" stroke-dasharray="1 5"/><line x1="43" y1="532.5" x2="964" y2="532.5" stroke="#8a4020" stroke-width="1" stroke-dasharray="1 5"/><line x1="45" y1="532.5" x2="964" y2="532.5" stroke="#2f8a32" stroke-width="1" stroke-dasharray="1 5"/><line x1="40" y1="562.5" x2="964" y2="562.5" stroke="#4a2288" stroke-width="1" stroke-dasharray="1 1"/><line x1="41" y1="562.5" x2="964" y2="562.5" stroke="#2f8a32" stroke-width="1" stroke-dasharray="1 5"/><line x1="43" y1="562.5" x2="964" y2="562.5" stroke="#8a4020" stroke-width="1" stroke-dasharray="1 5"/><line x1="45" y1="562.5" x2="964" y2="562.5" stroke="#2f8a32" stroke-width="1" stroke-dasharray="1 5"/><line x1="113.5" y1="482" x2="113.5" y2="582" stroke="#9a9aa2" stroke-width="1"/><line x1="224.5" y1="482" x2="224.5" y2="582" stroke="#9a9aa2" stroke-width="1"/><line x1="335.5" y1="482" x2="335.5" y2="582" stroke="#9a9aa2" stroke-width="1"/><line x1="446.5" y1="482" x2="446.5" y2="582" stroke="#9a9aa2" stroke-width="1"/><line x1="557.5" y1="482" x2="557.5" y2="582" stroke="#9a9aa2" stroke-width="1"/><line x1="668.5" y1="482" x2="668.5" y2="582" stroke="#9a9aa2" stroke-width="1"/><line x1="598.5" y1="482" x2="598.5" y2="582" stroke="#9a9aa2" stroke-width="1"/><line x1="779.5" y1="482" x2="779.5" y2="582" stroke="#a8a000" stroke-width="1"/><rect x="40.5" y="482.5" width="924" height="99" fill="none" stroke="#777" stroke-width="1" stroke-dasharray="1 1"/><polyline points="40.0,522.5 53.8,514.9 63.0,511.9 72.2,517.0 81.5,529.6 90.8,547.4 100.0,553.8 109.2,557.1 118.5,553.8 127.8,554.3 137.0,555.0 146.2,558.1 155.5,558.1 164.8,560.9 174.0,562.7 183.2,567.7 192.5,571.5 201.8,574.1 211.0,571.5 220.2,565.2 229.5,561.4 238.8,562.7 248.0,562.7 257.2,562.7 266.5,555.8 275.8,543.6 285.0,528.4 294.2,539.5 303.5,557.3 312.8,580.9 322.0,582.5 331.2,582.5 340.5,582.5 349.8,582.5 359.0,582.5 368.2,582.5 377.5,582.5 386.8,582.5 396.0,563.6 405.2,546.0 414.5,528.0 423.8,517.9 433.0,516.6 442.2,520.4 451.5,527.0 460.8,533.1 470.0,536.4 479.2,534.4 488.5,536.4 497.8,535.5 507.0,534.9 516.2,527.0 525.5,521.7 534.8,505.2 544.0,500.1 553.2,501.9 562.5,509.0 571.8,526.8 581.0,543.3 590.2,557.3 599.5,558.5 608.8,561.1 618.0,552.2 627.2,543.3 636.5,530.6 645.8,517.9 655.0,510.3 664.2,502.7 673.5,501.4 682.8,500.1 692.0,500.1 701.2,506.0 710.5,520.4 719.8,542.5 729.0,549.6 738.2,543.3 747.5,533.9 756.8,532.4 766.0,535.7 775.2,531.9 784.5,525.5 793.8,524.2 803.0,534.9 812.2,551.7 821.5,560.3 830.8,564.9 840.0,562.3 849.2,562.3 858.5,558.5 867.8,555.2" fill="none" stroke="#ff6a10" stroke-width="1.4"/><polyline points="40.0,514.4 53.8,507.3 63.0,510.6 72.2,570.3 81.5,558.0 90.8,559.4 100.0,553.0 109.2,547.0 118.5,563.2 127.8,559.6 137.0,545.4 146.2,580.4 155.5,540.3 164.8,573.6 174.0,577.9 183.2,574.1 192.5,577.1 201.8,560.9 211.0,557.6 220.2,557.1 229.5,562.1 238.8,572.3 248.0,559.6 257.2,532.9 266.5,532.9 275.8,522.5 285.0,483.6 294.2,581.4 303.5,582.5 312.8,582.5 322.0,582.5 331.2,582.5 340.5,582.5 349.8,582.5 359.0,582.5 368.2,582.5 377.5,557.8 386.8,516.1 396.0,541.5 405.2,516.6 414.5,496.3 423.8,525.0 433.0,525.0 442.2,545.0 451.5,545.8 460.8,514.1 470.0,540.0 479.2,545.8 488.5,534.9 497.8,524.2 507.0,528.8 516.2,495.0 525.5,500.9 534.8,491.2 544.0,498.9 553.2,536.4 562.5,536.4 571.8,581.4 581.0,544.6 590.2,566.9 599.5,552.2 608.8,566.9 618.0,498.3 627.2,517.9 636.5,533.9 645.8,483.6 655.0,510.3 664.2,494.3 673.5,506.5 682.8,495.0 692.0,495.0 701.2,575.0 710.5,570.5 719.8,537.0 729.0,517.9 738.2,530.6 747.5,538.2 756.8,547.1 766.0,525.5 775.2,495.8 784.5,526.5 793.8,572.5 803.0,560.3 812.2,573.3 821.5,554.7 830.8,566.9 840.0,561.8 849.2,555.2 858.5,552.7 867.8,533.1" fill="none" stroke="#8a2ae8" stroke-width="1.4"/></g><g clip-path="url(#cd)"><line x1="48.5" y1="607" x2="48.5" y2="708" stroke="#3c1c80" stroke-width="1" stroke-dasharray="1 2"/><line x1="57.5" y1="607" x2="57.5" y2="708" stroke="#3c1c80" stroke-width="1" stroke-dasharray="1 2"/><line x1="66.5" y1="607" x2="66.5" y2="708" stroke="#3c1c80" stroke-width="1" stroke-dasharray="1 2"/><line x1="76.5" y1="607" x2="76.5" y2="708" stroke="#3c1c80" stroke-width="1" stroke-dasharray="1 2"/><line x1="85.5" y1="607" x2="85.5" y2="708" stroke="#3c1c80" stroke-width="1" stroke-dasharray="1 2"/><line x1="94.5" y1="607" x2="94.5" y2="708" stroke="#3c1c80" stroke-width="1" stroke-dasharray="1 2"/><line x1="103.5" y1="607" x2="103.5" y2="708" stroke="#3c1c80" stroke-width="1" stroke-dasharray="1 2"/><line x1="113.5" y1="607" x2="113.5" y2="708" stroke="#3c1c80" stroke-width="1" stroke-dasharray="1 2"/><line x1="122.5" y1="607" x2="122.5" y2="708" stroke="#3c1c80" stroke-width="1" stroke-dasharray="1 2"/><line x1="131.5" y1="607" x2="131.5" y2="708" stroke="#3c1c80" stroke-width="1" stroke-dasharray="1 2"/><line x1="140.5" y1="607" x2="140.5" y2="708" stroke="#3c1c80" stroke-width="1" stroke-dasharray="1 2"/><line x1="150.5" y1="607" x2="150.5" y2="708" stroke="#3c1c80" stroke-width="1" stroke-dasharray="1 2"/><line x1="159.5" y1="607" x2="159.5" y2="708" stroke="#3c1c80" stroke-width="1" stroke-dasharray="1 2"/><line x1="168.5" y1="607" x2="168.5" y2="708" stroke="#3c1c80" stroke-width="1" stroke-dasharray="1 2"/><line x1="177.5" y1="607" x2="177.5" y2="708" stroke="#3c1c80" stroke-width="1" stroke-dasharray="1 2"/><line x1="187.5" y1="607" x2="187.5" y2="708" stroke="#3c1c80" stroke-width="1" stroke-dasharray="1 2"/><line x1="196.5" y1="607" x2="196.5" y2="708" stroke="#3c1c80" stroke-width="1" stroke-dasharray="1 2"/><line x1="205.5" y1="607" x2="205.5" y2="708" stroke="#3c1c80" stroke-width="1" stroke-dasharray="1 2"/><line x1="214.5" y1="607" x2="214.5" y2="708" stroke="#3c1c80" stroke-width="1" stroke-dasharray="1 2"/><line x1="224.5" y1="607" x2="224.5" y2="708" stroke="#3c1c80" stroke-width="1" stroke-dasharray="1 2"/><line x1="233.5" y1="607" x2="233.5" y2="708" stroke="#3c1c80" stroke-width="1" stroke-dasharray="1 2"/><line x1="242.5" y1="607" x2="242.5" y2="708" stroke="#3c1c80" stroke-width="1" stroke-dasharray="1 2"/><line x1="251.5" y1="607" x2="251.5" y2="708" stroke="#3c1c80" stroke-width="1" stroke-dasharray="1 2"/><line x1="261.5" y1="607" x2="261.5" y2="708" stroke="#3c1c80" stroke-width="1" stroke-dasharray="1 2"/><line x1="270.5" y1="607" x2="270.5" y2="708" stroke="#3c1c80" stroke-width="1" stroke-dasharray="1 2"/><line x1="279.5" y1="607" x2="279.5" y2="708" stroke="#3c1c80" stroke-width="1" stroke-dasharray="1 2"/><line x1="288.5" y1="607" x2="288.5" y2="708" stroke="#3c1c80" stroke-width="1" stroke-dasharray="1 2"/><line x1="298.5" y1="607" x2="298.5" y2="708" stroke="#3c1c80" stroke-width="1" stroke-dasharray="1 2"/><line x1="307.5" y1="607" x2="307.5" y2="708" stroke="#3c1c80" stroke-width="1" stroke-dasharray="1 2"/><line x1="316.5" y1="607" x2="316.5" y2="708" stroke="#3c1c80" stroke-width="1" stroke-dasharray="1 2"/><line x1="325.5" y1="607" x2="325.5" y2="708" stroke="#3c1c80" stroke-width="1" stroke-dasharray="1 2"/><line x1="335.5" y1="607" x2="335.5" y2="708" stroke="#3c1c80" stroke-width="1" stroke-dasharray="1 2"/><line x1="344.5" y1="607" x2="344.5" y2="708" stroke="#3c1c80" stroke-width="1" stroke-dasharray="1 2"/><line x1="353.5" y1="607" x2="353.5" y2="708" stroke="#3c1c80" stroke-width="1" stroke-dasharray="1 2"/><line x1="362.5" y1="607" x2="362.5" y2="708" stroke="#3c1c80" stroke-width="1" stroke-dasharray="1 2"/><line x1="372.5" y1="607" x2="372.5" y2="708" stroke="#3c1c80" stroke-width="1" stroke-dasharray="1 2"/><line x1="381.5" y1="607" x2="381.5" y2="708" stroke="#3c1c80" stroke-width="1" stroke-dasharray="1 2"/><line x1="390.5" y1="607" x2="390.5" y2="708" stroke="#3c1c80" stroke-width="1" stroke-dasharray="1 2"/><line x1="399.5" y1="607" x2="399.5" y2="708" stroke="#3c1c80" stroke-width="1" stroke-dasharray="1 2"/><line x1="409.5" y1="607" x2="409.5" y2="708" stroke="#3c1c80" stroke-width="1" stroke-dasharray="1 2"/><line x1="418.5" y1="607" x2="418.5" y2="708" stroke="#3c1c80" stroke-width="1" stroke-dasharray="1 2"/><line x1="427.5" y1="607" x2="427.5" y2="708" stroke="#3c1c80" stroke-width="1" stroke-dasharray="1 2"/><line x1="436.5" y1="607" x2="436.5" y2="708" stroke="#3c1c80" stroke-width="1" stroke-dasharray="1 2"/><line x1="446.5" y1="607" x2="446.5" y2="708" stroke="#3c1c80" stroke-width="1" stroke-dasharray="1 2"/><line x1="455.5" y1="607" x2="455.5" y2="708" stroke="#3c1c80" stroke-width="1" stroke-dasharray="1 2"/><line x1="464.5" y1="607" x2="464.5" y2="708" stroke="#3c1c80" stroke-width="1" stroke-dasharray="1 2"/><line x1="473.5" y1="607" x2="473.5" y2="708" stroke="#3c1c80" stroke-width="1" stroke-dasharray="1 2"/><line x1="483.5" y1="607" x2="483.5" y2="708" stroke="#3c1c80" stroke-width="1" stroke-dasharray="1 2"/><line x1="492.5" y1="607" x2="492.5" y2="708" stroke="#3c1c80" stroke-width="1" stroke-dasharray="1 2"/><line x1="501.5" y1="607" x2="501.5" y2="708" stroke="#3c1c80" stroke-width="1" stroke-dasharray="1 2"/><line x1="510.5" y1="607" x2="510.5" y2="708" stroke="#3c1c80" stroke-width="1" stroke-dasharray="1 2"/><line x1="520.5" y1="607" x2="520.5" y2="708" stroke="#3c1c80" stroke-width="1" stroke-dasharray="1 2"/><line x1="529.5" y1="607" x2="529.5" y2="708" stroke="#3c1c80" stroke-width="1" stroke-dasharray="1 2"/><line x1="538.5" y1="607" x2="538.5" y2="708" stroke="#3c1c80" stroke-width="1" stroke-dasharray="1 2"/><line x1="547.5" y1="607" x2="547.5" y2="708" stroke="#3c1c80" stroke-width="1" stroke-dasharray="1 2"/><line x1="557.5" y1="607" x2="557.5" y2="708" stroke="#3c1c80" stroke-width="1" stroke-dasharray="1 2"/><line x1="566.5" y1="607" x2="566.5" y2="708" stroke="#3c1c80" stroke-width="1" stroke-dasharray="1 2"/><line x1="575.5" y1="607" x2="575.5" y2="708" stroke="#3c1c80" stroke-width="1" stroke-dasharray="1 2"/><line x1="584.5" y1="607" x2="584.5" y2="708" stroke="#3c1c80" stroke-width="1" stroke-dasharray="1 2"/><line x1="594.5" y1="607" x2="594.5" y2="708" stroke="#3c1c80" stroke-width="1" stroke-dasharray="1 2"/><line x1="603.5" y1="607" x2="603.5" y2="708" stroke="#3c1c80" stroke-width="1" stroke-dasharray="1 2"/><line x1="612.5" y1="607" x2="612.5" y2="708" stroke="#3c1c80" stroke-width="1" stroke-dasharray="1 2"/><line x1="621.5" y1="607" x2="621.5" y2="708" stroke="#3c1c80" stroke-width="1" stroke-dasharray="1 2"/><line x1="631.5" y1="607" x2="631.5" y2="708" stroke="#3c1c80" stroke-width="1" stroke-dasharray="1 2"/><line x1="640.5" y1="607" x2="640.5" y2="708" stroke="#3c1c80" stroke-width="1" stroke-dasharray="1 2"/><line x1="649.5" y1="607" x2="649.5" y2="708" stroke="#3c1c80" stroke-width="1" stroke-dasharray="1 2"/><line x1="658.5" y1="607" x2="658.5" y2="708" stroke="#3c1c80" stroke-width="1" stroke-dasharray="1 2"/><line x1="668.5" y1="607" x2="668.5" y2="708" stroke="#3c1c80" stroke-width="1" stroke-dasharray="1 2"/><line x1="677.5" y1="607" x2="677.5" y2="708" stroke="#3c1c80" stroke-width="1" stroke-dasharray="1 2"/><line x1="686.5" y1="607" x2="686.5" y2="708" stroke="#3c1c80" stroke-width="1" stroke-dasharray="1 2"/><line x1="695.5" y1="607" x2="695.5" y2="708" stroke="#3c1c80" stroke-width="1" stroke-dasharray="1 2"/><line x1="705.5" y1="607" x2="705.5" y2="708" stroke="#3c1c80" stroke-width="1" stroke-dasharray="1 2"/><line x1="714.5" y1="607" x2="714.5" y2="708" stroke="#3c1c80" stroke-width="1" stroke-dasharray="1 2"/><line x1="723.5" y1="607" x2="723.5" y2="708" stroke="#3c1c80" stroke-width="1" stroke-dasharray="1 2"/><line x1="732.5" y1="607" x2="732.5" y2="708" stroke="#3c1c80" stroke-width="1" stroke-dasharray="1 2"/><line x1="742.5" y1="607" x2="742.5" y2="708" stroke="#3c1c80" stroke-width="1" stroke-dasharray="1 2"/><line x1="751.5" y1="607" x2="751.5" y2="708" stroke="#3c1c80" stroke-width="1" stroke-dasharray="1 2"/><line x1="760.5" y1="607" x2="760.5" y2="708" stroke="#3c1c80" stroke-width="1" stroke-dasharray="1 2"/><line x1="769.5" y1="607" x2="769.5" y2="708" stroke="#3c1c80" stroke-width="1" stroke-dasharray="1 2"/><line x1="779.5" y1="607" x2="779.5" y2="708" stroke="#3c1c80" stroke-width="1" stroke-dasharray="1 2"/><line x1="788.5" y1="607" x2="788.5" y2="708" stroke="#3c1c80" stroke-width="1" stroke-dasharray="1 2"/><line x1="797.5" y1="607" x2="797.5" y2="708" stroke="#3c1c80" stroke-width="1" stroke-dasharray="1 2"/><line x1="806.5" y1="607" x2="806.5" y2="708" stroke="#3c1c80" stroke-width="1" stroke-dasharray="1 2"/><line x1="816.5" y1="607" x2="816.5" y2="708" stroke="#3c1c80" stroke-width="1" stroke-dasharray="1 2"/><line x1="825.5" y1="607" x2="825.5" y2="708" stroke="#3c1c80" stroke-width="1" stroke-dasharray="1 2"/><line x1="834.5" y1="607" x2="834.5" y2="708" stroke="#3c1c80" stroke-width="1" stroke-dasharray="1 2"/><line x1="843.5" y1="607" x2="843.5" y2="708" stroke="#3c1c80" stroke-width="1" stroke-dasharray="1 2"/><line x1="853.5" y1="607" x2="853.5" y2="708" stroke="#3c1c80" stroke-width="1" stroke-dasharray="1 2"/><line x1="862.5" y1="607" x2="862.5" y2="708" stroke="#3c1c80" stroke-width="1" stroke-dasharray="1 2"/><line x1="871.5" y1="607" x2="871.5" y2="708" stroke="#3c1c80" stroke-width="1" stroke-dasharray="1 2"/><line x1="880.5" y1="607" x2="880.5" y2="708" stroke="#3c1c80" stroke-width="1" stroke-dasharray="1 2"/><line x1="890.5" y1="607" x2="890.5" y2="708" stroke="#3c1c80" stroke-width="1" stroke-dasharray="1 2"/><line x1="899.5" y1="607" x2="899.5" y2="708" stroke="#3c1c80" stroke-width="1" stroke-dasharray="1 2"/><line x1="908.5" y1="607" x2="908.5" y2="708" stroke="#3c1c80" stroke-width="1" stroke-dasharray="1 2"/><line x1="917.5" y1="607" x2="917.5" y2="708" stroke="#3c1c80" stroke-width="1" stroke-dasharray="1 2"/><line x1="927.5" y1="607" x2="927.5" y2="708" stroke="#3c1c80" stroke-width="1" stroke-dasharray="1 2"/><line x1="936.5" y1="607" x2="936.5" y2="708" stroke="#3c1c80" stroke-width="1" stroke-dasharray="1 2"/><line x1="945.5" y1="607" x2="945.5" y2="708" stroke="#3c1c80" stroke-width="1" stroke-dasharray="1 2"/><line x1="954.5" y1="607" x2="954.5" y2="708" stroke="#3c1c80" stroke-width="1" stroke-dasharray="1 2"/><line x1="40" y1="621.5" x2="964" y2="621.5" stroke="#2a6a2a" stroke-width="1" stroke-dasharray="1 9"/><line x1="40" y1="635.5" x2="964" y2="635.5" stroke="#2a6a2a" stroke-width="1" stroke-dasharray="1 9"/><line x1="40" y1="655.5" x2="964" y2="655.5" stroke="#2a6a2a" stroke-width="1" stroke-dasharray="1 9"/><line x1="40" y1="689.5" x2="964" y2="689.5" stroke="#2a6a2a" stroke-width="1" stroke-dasharray="1 9"/><line x1="40" y1="641.5" x2="964" y2="641.5" stroke="#4a2288" stroke-width="1" stroke-dasharray="1 1"/><line x1="41" y1="641.5" x2="964" y2="641.5" stroke="#2f8a32" stroke-width="1" stroke-dasharray="1 5"/><line x1="43" y1="641.5" x2="964" y2="641.5" stroke="#8a4020" stroke-width="1" stroke-dasharray="1 5"/><line x1="45" y1="641.5" x2="964" y2="641.5" stroke="#2f8a32" stroke-width="1" stroke-dasharray="1 5"/><line x1="40" y1="675.5" x2="964" y2="675.5" stroke="#4a2288" stroke-width="1" stroke-dasharray="1 1"/><line x1="41" y1="675.5" x2="964" y2="675.5" stroke="#2f8a32" stroke-width="1" stroke-dasharray="1 5"/><line x1="43" y1="675.5" x2="964" y2="675.5" stroke="#8a4020" stroke-width="1" stroke-dasharray="1 5"/><line x1="45" y1="675.5" x2="964" y2="675.5" stroke="#2f8a32" stroke-width="1" stroke-dasharray="1 5"/><line x1="113.5" y1="607" x2="113.5" y2="708" stroke="#9a9aa2" stroke-width="1"/><line x1="224.5" y1="607" x2="224.5" y2="708" stroke="#9a9aa2" stroke-width="1"/><line x1="335.5" y1="607" x2="335.5" y2="708" stroke="#9a9aa2" stroke-width="1"/><line x1="446.5" y1="607" x2="446.5" y2="708" stroke="#9a9aa2" stroke-width="1"/><line x1="557.5" y1="607" x2="557.5" y2="708" stroke="#9a9aa2" stroke-width="1"/><line x1="668.5" y1="607" x2="668.5" y2="708" stroke="#9a9aa2" stroke-width="1"/><line x1="598.5" y1="607" x2="598.5" y2="708" stroke="#9a9aa2" stroke-width="1"/><line x1="779.5" y1="607" x2="779.5" y2="708" stroke="#a8a000" stroke-width="1"/><rect x="40.5" y="607.5" width="924" height="100" fill="none" stroke="#777" stroke-width="1" stroke-dasharray="1 1"/><rect x="40.5" y="639.5" width="8" height="1.5" fill="#aaa"/><rect x="50.2" y="638.5" width="7" height="2.0" fill="url(#hp)" stroke="#b8b8b8" stroke-width="1"/><rect x="59.0" y="639.5" width="8" height="1.5" fill="#aaa"/><rect x="68.2" y="639.5" width="8" height="1.5" fill="#aaa"/><rect x="78.0" y="640.5" width="7" height="4.0" fill="url(#hp)" stroke="#b8b8b8" stroke-width="1"/><rect x="87.2" y="640.5" width="7" height="6.4" fill="url(#hp)" stroke="#b8b8b8" stroke-width="1"/><rect x="96.5" y="640.5" width="7" height="7.0" fill="url(#hp)" stroke="#b8b8b8" stroke-width="1"/><rect x="105.8" y="640.5" width="7" height="7.0" fill="url(#hp)" stroke="#b8b8b8" stroke-width="1"/><rect x="115.0" y="640.5" width="7" height="9.0" fill="url(#hp)" stroke="#b8b8b8" stroke-width="1"/><rect x="124.2" y="640.5" width="7" height="10.8" fill="url(#hp)" stroke="#b8b8b8" stroke-width="1"/><rect x="133.5" y="640.5" width="7" height="10.8" fill="url(#hp)" stroke="#b8b8b8" stroke-width="1"/><rect x="142.8" y="640.5" width="7" height="8.0" fill="url(#hp)" stroke="#b8b8b8" stroke-width="1"/><rect x="152.0" y="640.5" width="7" height="11.5" fill="url(#hp)" stroke="#b8b8b8" stroke-width="1"/><rect x="161.2" y="640.5" width="7" height="9.5" fill="url(#hp)" stroke="#b8b8b8" stroke-width="1"/><rect x="170.5" y="640.5" width="7" height="13.3" fill="url(#hp)" stroke="#b8b8b8" stroke-width="1"/><rect x="179.8" y="640.5" width="7" height="13.3" fill="url(#hp)" stroke="#b8b8b8" stroke-width="1"/><rect x="189.0" y="640.5" width="7" height="14.0" fill="url(#hp)" stroke="#b8b8b8" stroke-width="1"/><rect x="198.2" y="640.5" width="7" height="16.6" fill="url(#hp)" stroke="#b8b8b8" stroke-width="1"/><rect x="207.5" y="640.5" width="7" height="15.0" fill="url(#hp)" stroke="#b8b8b8" stroke-width="1"/><rect x="216.8" y="640.5" width="7" height="14.0" fill="url(#hp)" stroke="#b8b8b8" stroke-width="1"/><rect x="226.0" y="640.5" width="7" height="11.5" fill="url(#hp)" stroke="#b8b8b8" stroke-width="1"/><rect x="235.2" y="640.5" width="7" height="9.5" fill="url(#hp)" stroke="#b8b8b8" stroke-width="1"/><rect x="244.5" y="640.5" width="7" height="8.0" fill="url(#hp)" stroke="#b8b8b8" stroke-width="1"/><rect x="253.8" y="640.5" width="7" height="7.0" fill="url(#hp)" stroke="#b8b8b8" stroke-width="1"/><rect x="263.0" y="640.5" width="7" height="2.0" fill="url(#hp)" stroke="#b8b8b8" stroke-width="1"/><rect x="271.8" y="639.5" width="8" height="1.5" fill="#aaa"/><rect x="281.5" y="634.8" width="7" height="5.7" fill="url(#hp)" stroke="#b8b8b8" stroke-width="1"/><rect x="290.8" y="630.5" width="7" height="10.0" fill="url(#hp)" stroke="#b8b8b8" stroke-width="1"/><rect x="300.0" y="630.5" width="7" height="10.0" fill="url(#hp)" stroke="#b8b8b8" stroke-width="1"/><rect x="309.2" y="629.7" width="7" height="10.8" fill="url(#hp)" stroke="#b8b8b8" stroke-width="1"/><rect x="318.5" y="626.4" width="7" height="14.1" fill="url(#hp)" stroke="#b8b8b8" stroke-width="1"/><rect x="327.8" y="630.5" width="7" height="10.0" fill="url(#hp)" stroke="#b8b8b8" stroke-width="1"/><rect x="337.0" y="632.7" width="7" height="7.8" fill="url(#hp)" stroke="#b8b8b8" stroke-width="1"/><rect x="346.2" y="633.5" width="7" height="7.0" fill="url(#hp)" stroke="#b8b8b8" stroke-width="1"/><rect x="355.5" y="634.8" width="7" height="5.7" fill="url(#hp)" stroke="#b8b8b8" stroke-width="1"/><rect x="364.8" y="636.5" width="7" height="4.0" fill="url(#hp)" stroke="#b8b8b8" stroke-width="1"/><rect x="374.0" y="638.5" width="7" height="2.0" fill="url(#hp)" stroke="#b8b8b8" stroke-width="1"/><rect x="383.2" y="636.8" width="7" height="3.7" fill="url(#hp)" stroke="#b8b8b8" stroke-width="1"/><rect x="392.5" y="636.8" width="7" height="3.7" fill="url(#hp)" stroke="#b8b8b8" stroke-width="1"/><rect x="401.8" y="634.8" width="7" height="5.7" fill="url(#hp)" stroke="#b8b8b8" stroke-width="1"/><rect x="411.0" y="632.7" width="7" height="7.8" fill="url(#hp)" stroke="#b8b8b8" stroke-width="1"/><rect x="420.2" y="634.8" width="7" height="5.7" fill="url(#hp)" stroke="#b8b8b8" stroke-width="1"/><rect x="429.5" y="635.5" width="7" height="5.0" fill="url(#hp)" stroke="#b8b8b8" stroke-width="1"/><rect x="438.8" y="638.5" width="7" height="2.0" fill="url(#hp)" stroke="#b8b8b8" stroke-width="1"/><rect x="447.5" y="639.5" width="8" height="1.5" fill="#aaa"/><rect x="456.8" y="639.5" width="8" height="1.5" fill="#aaa"/><rect x="466.0" y="639.5" width="8" height="1.5" fill="#aaa"/><rect x="475.2" y="639.5" width="8" height="1.5" fill="#aaa"/><rect x="484.5" y="639.5" width="8" height="1.5" fill="#aaa"/><rect x="493.8" y="639.5" width="8" height="1.5" fill="#aaa"/><rect x="503.0" y="639.5" width="8" height="1.5" fill="#aaa"/><rect x="512.2" y="639.5" width="8" height="1.5" fill="#aaa"/><rect x="522.0" y="637.8" width="7" height="2.7" fill="url(#hp)" stroke="#b8b8b8" stroke-width="1"/><rect x="531.2" y="636.5" width="7" height="4.0" fill="url(#hp)" stroke="#b8b8b8" stroke-width="1"/><rect x="540.5" y="635.5" width="7" height="5.0" fill="url(#hp)" stroke="#b8b8b8" stroke-width="1"/><rect x="549.8" y="637.3" width="7" height="3.2" fill="url(#hp)" stroke="#b8b8b8" stroke-width="1"/><rect x="559.0" y="638.1" width="7" height="2.4" fill="url(#hp)" stroke="#b8b8b8" stroke-width="1"/><rect x="567.8" y="639.5" width="8" height="1.5" fill="#aaa"/><rect x="577.0" y="639.5" width="8" height="1.5" fill="#aaa"/><rect x="586.2" y="639.5" width="8" height="1.5" fill="#aaa"/><rect x="595.5" y="639.5" width="8" height="1.5" fill="#aaa"/><rect x="604.8" y="639.5" width="8" height="1.5" fill="#aaa"/><rect x="614.0" y="639.5" width="8" height="1.5" fill="#aaa"/><rect x="623.8" y="638.5" width="7" height="2.0" fill="url(#hp)" stroke="#b8b8b8" stroke-width="1"/><rect x="633.0" y="638.5" width="7" height="2.0" fill="url(#hp)" stroke="#b8b8b8" stroke-width="1"/><rect x="642.2" y="632.2" width="7" height="8.3" fill="url(#hp)" stroke="#b8b8b8" stroke-width="1"/><rect x="651.5" y="631.5" width="7" height="9.0" fill="url(#hp)" stroke="#b8b8b8" stroke-width="1"/><rect x="660.8" y="628.9" width="7" height="11.6" fill="url(#hp)" stroke="#b8b8b8" stroke-width="1"/><rect x="670.0" y="628.9" width="7" height="11.6" fill="url(#hp)" stroke="#b8b8b8" stroke-width="1"/><rect x="679.2" y="628.9" width="7" height="11.6" fill="url(#hp)" stroke="#b8b8b8" stroke-width="1"/><rect x="688.5" y="628.9" width="7" height="11.6" fill="url(#hp)" stroke="#b8b8b8" stroke-width="1"/><rect x="697.8" y="638.1" width="7" height="2.4" fill="url(#hp)" stroke="#b8b8b8" stroke-width="1"/><rect x="707.0" y="640.5" width="7" height="2.7" fill="url(#hp)" stroke="#b8b8b8" stroke-width="1"/><rect x="716.2" y="640.5" width="7" height="2.7" fill="url(#hp)" stroke="#b8b8b8" stroke-width="1"/><rect x="725.0" y="639.5" width="8" height="1.5" fill="#aaa"/><rect x="734.2" y="639.5" width="8" height="1.5" fill="#aaa"/><rect x="744.0" y="640.5" width="7" height="2.0" fill="url(#hp)" stroke="#b8b8b8" stroke-width="1"/><rect x="752.8" y="639.5" width="8" height="1.5" fill="#aaa"/><rect x="762.0" y="639.5" width="8" height="1.5" fill="#aaa"/><rect x="771.8" y="637.9" width="7" height="2.6" fill="url(#hp)" stroke="#b8b8b8" stroke-width="1"/><rect x="781.0" y="638.5" width="7" height="2.0" fill="url(#hp)" stroke="#b8b8b8" stroke-width="1"/><rect x="790.2" y="640.5" width="7" height="3.0" fill="url(#hp)" stroke="#b8b8b8" stroke-width="1"/><rect x="799.5" y="640.5" width="7" height="6.3" fill="url(#hp)" stroke="#b8b8b8" stroke-width="1"/><rect x="808.8" y="640.5" width="7" height="10.0" fill="url(#hp)" stroke="#b8b8b8" stroke-width="1"/><rect x="818.0" y="640.5" width="7" height="9.3" fill="url(#hp)" stroke="#b8b8b8" stroke-width="1"/><rect x="827.2" y="640.5" width="7" height="10.0" fill="url(#hp)" stroke="#b8b8b8" stroke-width="1"/><rect x="836.5" y="640.5" width="7" height="10.0" fill="url(#hp)" stroke="#b8b8b8" stroke-width="1"/><rect x="845.8" y="640.5" width="7" height="8.0" fill="url(#hp)" stroke="#b8b8b8" stroke-width="1"/><rect x="855.0" y="640.5" width="7" height="6.8" fill="url(#hp)" stroke="#b8b8b8" stroke-width="1"/><rect x="864.2" y="640.5" width="7" height="6.3" fill="url(#hp)" stroke="#b8b8b8" stroke-width="1"/><polyline points="40.0,647.5 63.0,647.0 67.6,650.8 84.6,657.6 92.2,659.1 99.8,659.6 113.8,664.2 122.7,667.8 130.3,669.3 136.7,669.3 145.5,674.9 154.4,676.1 165.9,682.0 173.5,684.5 182.4,688.1 192.5,695.7 202.7,698.2 212.8,699.5 225.5,699.5 238.2,701.5 248.4,699.0 258.5,695.7 275.0,692.7 292.7,676.7 302.9,674.9 313.0,671.6 321.9,664.8 330.8,665.5 348.6,664.2 366.3,663.5 377.8,665.5 386.7,661.5 395.5,660.9 404.4,657.1 413.3,653.3 422.2,653.3 431.9,652.1 442.5,654.6 450.1,655.9 460.3,654.1 470.5,655.4 508.5,655.9 516.2,652.1 526.3,649.5 542.0,644.4 563.0,645.7 570.6,647.7 588.4,650.3 606.2,651.5 616.3,647.0 636.7,642.7 663.3,624.9 691.2,615.7 700.1,624.1 710.3,630.0 723.0,630.0 729.3,627.4 745.8,627.4 758.5,630.5 775.0,622.9 784.0,623.4 797.0,630.3 809.7,637.9 819.9,641.7 835.1,646.8 847.8,648.0 868.1,648.6" fill="none" stroke="#e01818" stroke-width="1.5"/><polyline points="40.0,649.5 63.0,648.2 80.8,650.8 101.1,654.0 113.8,657.1 131.6,662.2 157.0,668.5 179.8,676.1 202.7,683.8 223.0,689.6 243.3,693.9 261.1,695.7 273.8,694.7 280.0,693.4 305.4,685.1 330.8,676.7 356.2,670.6 381.6,668.1 396.8,665.5 414.6,660.9 432.4,657.9 457.8,657.1 483.1,656.4 508.5,655.9 523.8,654.1 540.0,652.1 555.4,650.0 580.8,649.5 606.2,649.5 631.6,647.0 657.0,638.1 682.4,630.0 697.6,628.4 723.0,627.9 758.5,627.9 776.3,625.9 783.0,626.5 802.1,628.5 822.4,633.6 842.7,639.7 855.4,642.2 868.1,643.5" fill="none" stroke="#18b8c8" stroke-width="1.5"/></g></svg>
<div class="t" id="tx9" style="left:109.12px;top:112px;font-size:12px;transform:scaleX(0.8793);transform-origin:0 0;">18:00</div>
<div class="t" id="tx10" style="left:219.12px;top:112px;font-size:12px;transform:scaleX(0.8793);transform-origin:0 0;">19:00</div>
<div class="t" id="tx11" style="left:331.12px;top:112px;font-size:12px;transform:scaleX(0.8793);transform-origin:0 0;">20:00</div>
<div class="t" id="tx12" style="left:443.12px;top:112px;font-size:12px;transform:scaleX(0.8793);transform-origin:0 0;">21:00</div>
<div class="t" id="tx13" style="left:666.12px;top:112px;font-size:12px;transform:scaleX(0.8793);transform-origin:0 0;">23:00</div>
<div class="t" id="tx14" style="left:776.47px;top:112px;font-size:12px;transform:scaleX(1.0345);transform-origin:0 0;color:#6a6000">12/24</div>
<div class="a" style="left:550px;top:110px;width:97px;height:13px;border:1px solid #1f5b8e;background:#e6eaf2"></div>
<div class="t" id="tx15" style="left:551.52px;top:112px;font-size:12px;transform:scaleX(0.9761);transform-origin:0 0;">2008/12/23 22:20</div>
<div class="t" id="tx16" style="left:978.60px;top:145px;font-size:10px;transform:scaleX(0.8960);transform-origin:0 0;">61.00</div>
<div class="t" id="tx17" style="left:978.60px;top:174px;font-size:10px;transform:scaleX(0.8960);transform-origin:0 0;">60.00</div>
<div class="t" id="tx18" style="left:977.67px;top:203px;font-size:10px;transform:scaleX(0.9333);transform-origin:0 0;">59.00</div>
<div class="t" id="tx19" style="left:977.67px;top:232px;font-size:10px;transform:scaleX(0.9333);transform-origin:0 0;">58.00</div>
<div class="t" id="tx20" style="left:977.67px;top:261px;font-size:10px;transform:scaleX(0.9333);transform-origin:0 0;">57.00</div>
<div class="t" id="tx21" style="left:977.67px;top:290px;font-size:10px;transform:scaleX(0.9333);transform-origin:0 0;">56.00</div>
<div class="t" id="tx22" style="left:977.67px;top:319px;font-size:10px;transform:scaleX(0.9333);transform-origin:0 0;">55.00</div>
<div class="t" id="tx23" style="left:977.67px;top:348px;font-size:10px;transform:scaleX(0.9333);transform-origin:0 0;">54.00</div>
<div class="t" id="tx24" style="left:977.67px;top:377px;font-size:10px;transform:scaleX(0.9333);transform-origin:0 0;">53.00</div>
<div class="t" id="tx25" style="left:977.67px;top:406px;font-size:10px;transform:scaleX(0.9333);transform-origin:0 0;">52.00</div>
<div class="t" id="tx26" style="left:977.67px;top:435px;font-size:10px;transform:scaleX(0.9333);transform-origin:0 0;">51.00</div>
<svg class="a" style="left:950px;top:122px" width="66" height="14"><path d="M3 1 L65 1 L65 12 L14 12 Z" fill="#dde2ea"/><path d="M14 12.5 L65 12.5" stroke="#1f5b8e" stroke-width="1"/><path d="M3 1 L14 12" stroke="#f4f6fa" stroke-width="1"/></svg>
<div class="a" style="left:954px;top:123px;width:61px;height:11px;overflow:hidden">
<div class="t" id="tx27" style="left:13.69px;top:-7px;font-size:13px;transform:scaleX(1.0097);transform-origin:0 0;color:#1f4f8e">61.85</div>
</div>
<div class="a" style="left:965px;top:419px;width:50px;height:15px;background:#6f9ccc;border-top:1px solid #3a70a8"></div>
<div class="t" id="tx28" style="left:973.60px;top:419px;font-size:14px;transform:scaleX(0.9029);transform-origin:0 0;color:#fff">51.45</div>
<div class="t" id="tx29" style="left:40.62px;top:472px;font-size:11px;transform:scaleX(0.7821);transform-origin:0 0;">ストキャスティクス: <span style="color:#8a22e0">%K[9]30.7692</span>&nbsp; <span style="color:#ff6600">SlowD[3]24.7863</span></div>
<div class="t" id="tx30" style="left:985.00px;top:498px;font-size:10px;transform:scaleX(0.9091);transform-origin:0 0;">80</div>
<div class="t" id="tx31" style="left:984.00px;top:528px;font-size:10px;transform:scaleX(1.0000);transform-origin:0 0;">50</div>
<div class="t" id="tx32" style="left:985.00px;top:558px;font-size:10px;transform:scaleX(0.9091);transform-origin:0 0;">20</div>
<div class="t" id="tx33" style="left:40.44px;top:598px;font-size:11px;transform:scaleX(0.8585);transform-origin:0 0;">MACD: <span style="color:#e00000">MACD[12-26]-1.2147</span>&nbsp; <span style="color:#00b0c0">シグナル[9]-1.1152</span>&nbsp; <span style="color:#808080">乖離-0.0995</span></div>
<div class="a" style="left:966px;top:607px;width:48px;height:102px;overflow:hidden">
<div class="t" id="tx34" style="left:10.07px;top:-5px;font-size:10px;transform:scaleX(0.9310);transform-origin:0 0;">5.0000</div>
<div class="t" id="tx35" style="left:11.00px;top:30px;font-size:10px;transform:scaleX(0.9000);transform-origin:0 0;">0.0000</div>
<div class="t" id="tx36" style="left:8.30px;top:64px;font-size:10px;transform:scaleX(0.9029);transform-origin:0 0;">-5.0000</div>
<div class="t" id="tx37" style="left:11.00px;top:99px;font-size:10px;transform:scaleX(0.8205);transform-origin:0 0;">-10.0000</div>
</div>
<div class="a" style="left:313px;top:712px;width:1px;height:18px;background:#1f5b8e"></div>
<div class="a" style="left:314px;top:713px;width:628px;height:17px;background:linear-gradient(#d4dbe5,#cfd8e3 40%,#e6eaf0 60%,#f2f4f8)"></div>
<div class="a" style="left:942px;top:712px;width:1px;height:18px;background:#1f5b8e"></div>
<div class="a" style="left:981px;top:712px;width:1px;height:18px;background:#1f5b8e"></div>
<svg class="a" style="left:315px;top:714px" width="16" height="16"><defs><linearGradient id="sb315" x1="0" y1="0" x2="0" y2="1"><stop offset="0" stop-color="#c4d4e4"/><stop offset="0.5" stop-color="#8fb0d0"/><stop offset="1" stop-color="#5a88b8"/></linearGradient></defs><rect x="0.5" y="0.5" width="14" height="14.5" rx="2.5" fill="url(#sb315)" stroke="#2a5f92" stroke-width="1"/><path d="M4 7.5 L10 3.5 L10 11.5 Z" fill="#fff"/></svg>
<svg class="a" style="left:792px;top:714px" width="15" height="16"><defs><linearGradient id="sb792" x1="0" y1="0" x2="0" y2="1"><stop offset="0" stop-color="#c4d4e4"/><stop offset="0.5" stop-color="#8fb0d0"/><stop offset="1" stop-color="#5a88b8"/></linearGradient></defs><rect x="0.5" y="0.5" width="13" height="14.5" rx="2.5" fill="url(#sb792)" stroke="#2a5f92" stroke-width="1"/><path d="M4.5 4 V12 M6.5 4 V12 M8.5 4 V12 M10.5 4 V12" stroke="#1f4f80" stroke-width="1"/></svg>
<svg class="a" style="left:926px;top:714px" width="16" height="16"><defs><linearGradient id="sb926" x1="0" y1="0" x2="0" y2="1"><stop offset="0" stop-color="#c4d4e4"/><stop offset="0.5" stop-color="#8fb0d0"/><stop offset="1" stop-color="#5a88b8"/></linearGradient></defs><rect x="0.5" y="0.5" width="14" height="14.5" rx="2.5" fill="url(#sb926)" stroke="#2a5f92" stroke-width="1"/><path d="M5 3.5 L11 7.5 L5 11.5 Z" fill="#fff"/></svg>
<div class="a" style="left:943px;top:713px;width:38px;height:17px;background:#fff"></div>
<div class="t" id="tx38" style="left:943.09px;top:716px;font-size:12px;transform:scaleX(0.9053);transform-origin:0 0;">100</div>
<svg class="a" style="left:965px;top:714px" width="16" height="16"><defs><linearGradient id="sb965" x1="0" y1="0" x2="0" y2="1"><stop offset="0" stop-color="#c4d4e4"/><stop offset="0.5" stop-color="#8fb0d0"/><stop offset="1" stop-color="#5a88b8"/></linearGradient></defs><rect x="0.5" y="0.5" width="14" height="14.5" rx="2.5" fill="url(#sb965)" stroke="#2a5f92" stroke-width="1"/><path d="M3.5 5 L11.5 5 L7.5 11 Z" fill="#fff"/></svg>
<svg class="a" style="left:983px;top:714px" width="16" height="16"><defs><linearGradient id="sb983" x1="0" y1="0" x2="0" y2="1"><stop offset="0" stop-color="#c4d4e4"/><stop offset="0.5" stop-color="#8fb0d0"/><stop offset="1" stop-color="#5a88b8"/></linearGradient></defs><rect x="0.5" y="0.5" width="14" height="14.5" rx="2.5" fill="url(#sb983)" stroke="#2a5f92" stroke-width="1"/><path d="M7.5 3.5 V11.5 M3.5 7.5 H11.5" stroke="#fff" stroke-width="3"/></svg>
<svg class="a" style="left:999px;top:714px" width="16" height="16"><defs><linearGradient id="sb999" x1="0" y1="0" x2="0" y2="1"><stop offset="0" stop-color="#c4d4e4"/><stop offset="0.5" stop-color="#8fb0d0"/><stop offset="1" stop-color="#5a88b8"/></linearGradient></defs><rect x="0.5" y="0.5" width="14" height="14.5" rx="2.5" fill="url(#sb999)" stroke="#2a5f92" stroke-width="1"/><path d="M3.5 7.5 H11.5" stroke="#fff" stroke-width="3"/></svg>
<div class="a" style="left:0;top:738px;width:1024px;height:6px;background:#f0f0f4"></div>
<div class="a" style="left:0;top:738px;width:108px;height:6px;border-top:1px solid #168a16;background:linear-gradient(#a8e898,#c8f0b8 60%,#d8f4d0)"></div>
<div class="a" style="left:108px;top:738px;width:166px;height:6px;border-top:1px solid #404050;background:#b8b8c4"></div>
<div class="a" style="left:274px;top:738px;width:326px;height:6px;border-top:1px solid #9090a0;background:#f4f4f8"></div>
<div class="a" style="left:600px;top:738px;width:108px;height:6px;border-top:1px solid #9090a0;background:#5a6a80"></div>
<div class="a" style="left:708px;top:738px;width:118px;height:6px;border-top:1px solid #9090a0;background:#d4d4de"></div>
<div class="a" style="left:826px;top:738px;width:198px;height:6px;background:#f8f8fa"></div>
<div class="a" style="left:37px;top:712px;width:978px;height:1px;background:#1f5b8e"></div>
<div class="t" id="tx39" style="left:40.19px;top:714px;font-size:12px;transform:scaleX(0.9143);transform-origin:0 0;">始値:51.63</div>
<div class="t" id="tx40" style="left:109.79px;top:715px;font-size:12px;transform:scaleX(0.9143);transform-origin:0 0;">高値:60.96</div>
<div class="t" id="tx41" style="left:179.69px;top:715px;font-size:12px;transform:scaleX(0.9143);transform-origin:0 0;">安値:51.31</div>
<div class="t" id="tx42" style="left:250.50px;top:714px;font-size:12px;transform:scaleX(0.8982);transform-origin:0 0;">終値:51.45</div>
</body></html>
